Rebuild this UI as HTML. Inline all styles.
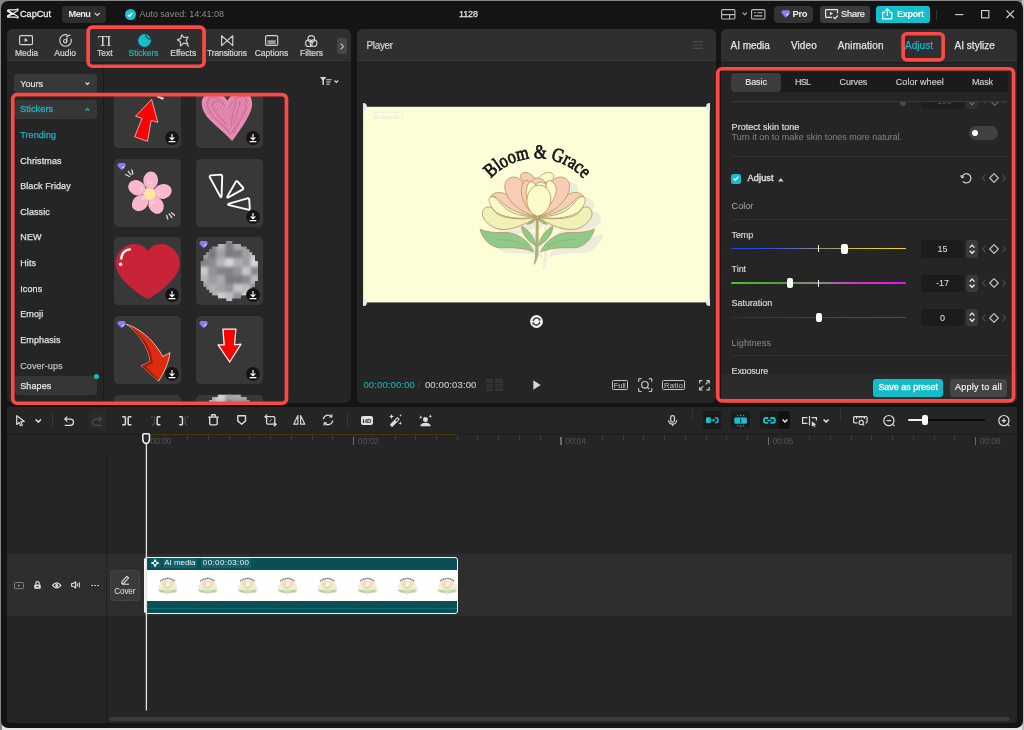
<!DOCTYPE html>
<html lang="en">
<head>
<meta charset="utf-8">
<title>CapCut - 1128</title>
<style>
*{box-sizing:border-box;margin:0;padding:0}
html,body{width:1024px;height:730px;overflow:hidden;background:#868789}
body{font-family:"Liberation Sans",sans-serif;font-size:9px;color:#e6e6e6;position:relative}
.abs{position:absolute}
#win{position:absolute;left:1.1px;top:1.1px;width:1021.8px;height:727.3px;background:#141414;border-radius:7px}
#ui{position:absolute;left:0;top:0;width:1024px;height:730px;overflow:hidden;will-change:transform}
.panel{position:absolute;background:#252525;border-radius:6px;overflow:hidden}
svg{position:absolute;overflow:visible}
.t{position:absolute;white-space:nowrap;line-height:1}
</style>
</head>
<body>
<div class="abs" style="left:2px;top:722px;width:1022px;height:8px;background:#e3e6e9"></div>
<div class="abs" style="left:1022px;top:0;width:2px;height:730px;background:#bfc0c2"></div>
<div id="win"></div>
<div id="ui">

<!-- s_title -->
<svg style="left:7px;top:9.3px;" width="11.5" height="9" viewBox="0 0 11.5 9"><path d="M0.6 0.9H8L11 0V1.4L1 7.4M0.6 0.9V2.2L4.4 4.5L0.6 6.8V8.1H8L11 9V7.6L1 1.6" fill="none" stroke="#ececec" stroke-width="1.2" stroke-linejoin="round"/></svg>
<div class="t" style="left:20px;top:10px;font-size:9.2px;color:#ececec;letter-spacing:-0.04px;-webkit-text-stroke:0.3px #ececec;">CapCut</div>
<div class="abs" style="left:62px;top:5.5px;width:44px;height:17.5px;background:#2d2d2d;border-radius:3px;"></div>
<div class="t" style="left:68.5px;top:10px;font-size:9.2px;color:#ececec;font-weight:bold;letter-spacing:-0.51px;">Menu</div>
<svg style="left:94px;top:12px;" width="6.5" height="4.5" viewBox="0 0 6.5 4.5"><path d="M0.7 0.9L3.25 3.4L5.8 0.9" fill="none" stroke="#d8d8d8" stroke-width="1.2" /></svg>
<div class="abs" style="left:124.8px;top:8.8px;width:11px;height:11px;background:#18c2d4;border-radius:5.5px;"></div>
<svg style="left:127.3px;top:11.6px;" width="6" height="5.5" viewBox="0 0 6 5.5"><path d="M0.8 2.7L2.4 4.3L5.3 1" fill="none" stroke="#fff" stroke-width="1.3" /></svg>
<div class="t" style="left:139.5px;top:10px;font-size:9px;color:#8c8c8c;letter-spacing:-0.03px;">Auto saved: 14:41:08</div>
<div class="t" style="left:459px;top:10px;font-size:9px;color:#e4e4e4;letter-spacing:-0.12px;-webkit-text-stroke:0.25px #e4e4e4;">1128</div>
<svg style="left:720.6px;top:9px;" width="14.5" height="10.6" viewBox="0 0 14.5 10.6"><rect x="0.6" y="0.6" width="13.3" height="9.4" rx="1" fill="none" stroke="#bcbcbc" stroke-width="1.1"/><path d="M0.6 5.6H13.9M8.6 5.6V10" fill="none" stroke="#bcbcbc" stroke-width="1.1" /></svg>
<svg style="left:741.5px;top:12px;" width="5.5" height="3.6" viewBox="0 0 5.5 3.6"><path d="M0.6 0.6L2.75 2.8L4.9 0.6" fill="none" stroke="#bcbcbc" stroke-width="1.1" /></svg>
<svg style="left:751px;top:9px;" width="14.5" height="10.6" viewBox="0 0 14.5 10.6"><rect x="0.6" y="0.6" width="13.3" height="9.4" rx="1" fill="none" stroke="#bcbcbc" stroke-width="1.1"/><path d="M3 3.8H4.8M6.2 3.8H11.5M3 6.9H11.5" fill="none" stroke="#bcbcbc" stroke-width="1.1" /></svg>
<div class="abs" style="left:773.8px;top:5.5px;width:39.6px;height:17.5px;background:#333;border-radius:4.5px;"></div>
<svg style="left:781px;top:10.3px;" width="9.5" height="8" viewBox="0 0 9.5 8"><path d="M1.8 0.2H7.7L9.4 2.6L4.75 7.8L0.1 2.6Z" fill="#8e7cf6"/><path d="M5.2 4.1L8.3 3.4L6.2 6.2Z" fill="#ece8ff"/></svg>
<div class="t" style="left:792.5px;top:9px;font-size:9.4px;color:#f2f2f2;font-weight:bold;letter-spacing:-0.34px;">Pro</div>
<div class="abs" style="left:820px;top:5.5px;width:50px;height:17.5px;background:#3d3d3d;border-radius:3px;"></div>
<svg style="left:825px;top:9px;" width="13.5" height="10.5" viewBox="0 0 13.5 10.5"><path d="M7 8.4H1.2Q0.6 8.4 0.6 7.8V1.2Q0.6 0.6 1.2 0.6H11.9Q12.5 0.6 12.5 1.2V4.6" fill="none" stroke="#e8e8e8" stroke-width="1.2" /><path d="M4.9 2.7L8 4.5L4.9 6.3Z" fill="#e8e8e8"/><path d="M8.4 8L10 9.6L12.9 6.5" fill="none" stroke="#e8e8e8" stroke-width="1.2" /></svg>
<div class="t" style="left:841px;top:10px;font-size:9.2px;color:#efefef;letter-spacing:-0.14px;-webkit-text-stroke:0.2px #efefef;">Share</div>
<div class="abs" style="left:876.2px;top:5.5px;width:53.4px;height:17.5px;background:#13bfcd;border-radius:3px;"></div>
<svg style="left:882px;top:8.2px;" width="10.5" height="11.5" viewBox="0 0 10.5 11.5"><path d="M3 4.3H0.7V10.8H9.8V4.3H7.5" fill="none" stroke="#fff" stroke-width="1.2" /><path d="M5.25 8V1M3 3.1L5.25 0.9L7.5 3.1" fill="none" stroke="#fff" stroke-width="1.2" /></svg>
<div class="t" style="left:897px;top:10px;font-size:9.2px;color:#fff;font-weight:bold;letter-spacing:-0.43px;">Export</div>
<div class="abs" style="left:936px;top:10px;width:1px;height:9.5px;background:#353535;"></div>
<svg style="left:955px;top:14px;" width="8.5" height="1.2" viewBox="0 0 8.5 1.2"><path d="M0 0.6H8.5" fill="none" stroke="#d6d6d6" stroke-width="1.1" /></svg>
<svg style="left:981px;top:10.4px;" width="8.4" height="8.4" viewBox="0 0 8.4 8.4"><rect x="0.55" y="0.55" width="7.3" height="7.3" fill="none" stroke="#d6d6d6" stroke-width="1.1"/></svg>
<svg style="left:1006px;top:10.4px;" width="8.4" height="8.4" viewBox="0 0 8.4 8.4"><path d="M0.4 0.4L8 8M8 0.4L0.4 8" fill="none" stroke="#d6d6d6" stroke-width="1.1" /></svg>
<!-- s_left -->
<div class="panel" style="left:7px;top:28.6px;width:344.3px;height:374.6px"></div>
<div class="abs" style="left:7px;top:28.6px;width:344.3px;height:33.4px;background:#2f2f2f;border-radius:6px 6px 0 0"></div>
<div class="abs" style="left:7px;top:62px;width:344.3px;height:1px;background:#1c1c1c;"></div>
<svg style="left:19.1px;top:35.4px;" width="14.1" height="10.3" viewBox="0 0 14.1 10.3"><rect x="0.6" y="0.6" width="12.9" height="9.1" rx="1.2" fill="none" stroke="#d4d4d4" stroke-width="1.15"/><path d="M5.6 3.1L9 5.15L5.6 7.2Z" fill="#d4d4d4"/></svg>
<div class="t" style="left:15px;top:49px;font-size:8.5px;color:#d8d8d8;letter-spacing:-0.04px;-webkit-text-stroke:0.2px #d8d8d8;">Media</div>
<svg style="left:59px;top:34.2px;" width="13" height="13" viewBox="0 0 13 13"><path d="M12.1 5A5.8 5.8 0 1 1 8.5 1.05" fill="none" stroke="#d4d4d4" stroke-width="1.15" stroke-linecap="round"/><circle cx="6.2" cy="7.2" r="1.7" fill="none" stroke="#d4d4d4" stroke-width="1.1"/><path d="M7.9 7.2V2.6L11 0.9" fill="none" stroke="#d4d4d4" stroke-width="1.1" stroke-linecap="round" stroke-linejoin="round"/></svg>
<div class="t" style="left:54.3px;top:49px;font-size:8.5px;color:#d8d8d8;letter-spacing:-0.01px;-webkit-text-stroke:0.2px #d8d8d8;">Audio</div>
<div class="t" style="left:98px;top:33px;font-size:15.5px;color:#dadada;font-family:'Liberation Serif',serif;letter-spacing:-1.23px;">TI</div>
<div class="t" style="left:97px;top:49px;font-size:8.5px;color:#d8d8d8;letter-spacing:0.04px;-webkit-text-stroke:0.2px #d8d8d8;">Text</div>
<svg style="left:137.6px;top:34.1px;" width="13" height="13" viewBox="0 0 13 13"><circle cx="6.5" cy="6.5" r="6.4" fill="#17bccb"/><path d="M7.6 0.4Q7.4 4.2 12.4 5.4" fill="none" stroke="#2e2e2e" stroke-width="1.1" /></svg>
<div class="t" style="left:128.5px;top:49px;font-size:8.5px;color:#18b7c8;letter-spacing:-0.03px;-webkit-text-stroke:0.2px #18b7c8;">Stickers</div>
<svg style="left:177px;top:34px;" width="12.8" height="13" viewBox="0 0 12.8 13"><g transform="rotate(-14 6 6)"><path d="M5.9 0.6L7.7 3.9L11.6 4.3L8.9 7.1L9.7 11.1L5.9 9.2L2.2 11.2L3 7.1L0.6 4.4L4.3 3.9Z" fill="none" stroke="#d4d4d4" stroke-width="1.15" stroke-linejoin="round"/></g><path d="M9.9 10.4L11.7 12.6" fill="none" stroke="#d4d4d4" stroke-width="1.1" /></svg>
<div class="t" style="left:170.2px;top:49px;font-size:8.5px;color:#d8d8d8;letter-spacing:0.03px;-webkit-text-stroke:0.2px #d8d8d8;">Effects</div>
<svg style="left:221.2px;top:35.1px;" width="12.4" height="11.4" viewBox="0 0 12.4 11.4"><path d="M0.6 0.8L11.8 10.6V0.8L0.6 10.6Z" fill="none" stroke="#d4d4d4" stroke-width="1.15" stroke-linejoin="round"/></svg>
<div class="t" style="left:207px;top:49px;font-size:8.5px;color:#d8d8d8;letter-spacing:-0.13px;-webkit-text-stroke:0.2px #d8d8d8;">Transitions</div>
<svg style="left:264.8px;top:35px;" width="13.3" height="11" viewBox="0 0 13.3 11"><rect x="0.6" y="0.6" width="12.1" height="9.8" rx="1.2" fill="none" stroke="#d4d4d4" stroke-width="1.15"/><path d="M2.6 6.2H10.7M2.6 8.2H10.7" fill="none" stroke="#d4d4d4" stroke-width="1.2" /></svg>
<div class="t" style="left:254.7px;top:49px;font-size:8.5px;color:#d8d8d8;letter-spacing:0.01px;-webkit-text-stroke:0.2px #d8d8d8;">Captions</div>
<svg style="left:305px;top:34.6px;" width="12.5" height="12.4" viewBox="0 0 12.5 12.4"><circle cx="6.25" cy="3.9" r="3.3" fill="none" stroke="#d4d4d4" stroke-width="1.15"/><circle cx="3.9" cy="8.2" r="3.3" fill="none" stroke="#d4d4d4" stroke-width="1.15"/><circle cx="8.6" cy="8.2" r="3.3" fill="none" stroke="#d4d4d4" stroke-width="1.15"/></svg>
<div class="t" style="left:300px;top:49px;font-size:8.5px;color:#d8d8d8;letter-spacing:-0.02px;-webkit-text-stroke:0.2px #d8d8d8;">Filters</div>
<div class="abs" style="left:337px;top:38.2px;width:9.9px;height:15.6px;background:#474747;border-radius:2.5px;"></div>
<svg style="left:340px;top:42.6px;" width="4.2" height="7" viewBox="0 0 4.2 7"><path d="M0.7 0.7L3.5 3.5L0.7 6.3" fill="none" stroke="#cfcfcf" stroke-width="1.05" /></svg>
<div class="abs" style="left:13.5px;top:74.3px;width:83.2px;height:19px;background:#383838;border-radius:3px;"></div>
<div class="t" style="left:20.3px;top:80px;font-size:9px;color:#e2e2e2;letter-spacing:-0.02px;-webkit-text-stroke:0.2px #e2e2e2;">Yours</div>
<svg style="left:85px;top:82.4px;" width="4.8" height="3" viewBox="0 0 4.8 3"><path d="M0.5 0.5L2.4 2.4L4.3 0.5" fill="none" stroke="#e0e0e0" stroke-width="1.1" /></svg>
<div class="abs" style="left:15px;top:100.4px;width:81.7px;height:18.6px;background:#363636;border-radius:3px;"></div>
<div class="t" style="left:20px;top:105px;font-size:9.3px;color:#19b6c6;letter-spacing:0.03px;-webkit-text-stroke:0.3px #19b6c6;">Stickers</div>
<svg style="left:85px;top:108px;" width="4.8" height="3" viewBox="0 0 4.8 3"><path d="M0.5 2.5L2.4 0.6L4.3 2.5" fill="none" stroke="#19b6c6" stroke-width="1.1" /></svg>
<div class="t" style="left:20.2px;top:131px;font-size:9px;color:#19b6c6;letter-spacing:0.1px;-webkit-text-stroke:0.25px #19b6c6;">Trending</div>
<div class="t" style="left:20.2px;top:157px;font-size:9px;color:#e0e0e0;letter-spacing:0.1px;-webkit-text-stroke:0.25px #e0e0e0;">Christmas</div>
<div class="t" style="left:20.2px;top:182px;font-size:9px;color:#e0e0e0;letter-spacing:0.09px;-webkit-text-stroke:0.25px #e0e0e0;">Black Friday</div>
<div class="t" style="left:20.2px;top:208px;font-size:9px;color:#e0e0e0;letter-spacing:0.1px;-webkit-text-stroke:0.25px #e0e0e0;">Classic</div>
<div class="t" style="left:20.2px;top:233px;font-size:9px;color:#e0e0e0;letter-spacing:0.21px;-webkit-text-stroke:0.25px #e0e0e0;">NEW</div>
<div class="t" style="left:20.2px;top:259px;font-size:9px;color:#e0e0e0;letter-spacing:0.1px;-webkit-text-stroke:0.25px #e0e0e0;">Hits</div>
<div class="t" style="left:20.2px;top:285px;font-size:9px;color:#e0e0e0;letter-spacing:0.11px;-webkit-text-stroke:0.25px #e0e0e0;">Icons</div>
<div class="t" style="left:20.2px;top:310px;font-size:9px;color:#e0e0e0;letter-spacing:0.11px;-webkit-text-stroke:0.25px #e0e0e0;">Emoji</div>
<div class="t" style="left:20.2px;top:336px;font-size:9px;color:#e0e0e0;letter-spacing:0.11px;-webkit-text-stroke:0.25px #e0e0e0;">Emphasis</div>
<div class="t" style="left:20.2px;top:362px;font-size:9px;color:#bdbdbd;letter-spacing:0.1px;-webkit-text-stroke:0.25px #bdbdbd;">Cover-ups</div>
<div class="abs" style="left:15px;top:376.1px;width:81.7px;height:19.1px;background:#363636;border-radius:3px;"></div>
<div class="t" style="left:20.2px;top:382px;font-size:9px;color:#e4e4e4;letter-spacing:0.12px;-webkit-text-stroke:0.25px #e4e4e4;">Shapes</div>
<div class="abs" style="left:94px;top:373.7px;width:5.4px;height:5.4px;background:#17bccb;border-radius:2.7px;"></div>
<div class="abs" style="left:102.8px;top:63px;width:1px;height:340.4px;background:#1b1b1b;"></div>
<svg style="left:320px;top:77.4px;" width="12" height="8.6" viewBox="0 0 12 8.6"><path d="M0 0H6.3L3.9 3.3V8.2L2.4 7.4V3.3Z" fill="#dadada"/><path d="M6.3 2.7H11.6M6.3 5H10.6M6.3 7.2H9.6" fill="none" stroke="#dadada" stroke-width="1.1" /></svg>
<svg style="left:334.4px;top:80.2px;" width="4.8" height="3" viewBox="0 0 4.8 3"><path d="M0.5 0.5L2.4 2.4L4.3 0.5" fill="none" stroke="#dadada" stroke-width="1.1" /></svg>
<div class="abs" style="left:104px;top:95px;width:247px;height:308.2px;overflow:hidden"><div class="abs" style="left:-104px;top:-95px;width:400px;height:500px">
<div class="abs" style="left:113.8px;top:80.2px;width:67.6px;height:67.8px;background:#383838;border-radius:4.5px;"></div>
<div class="abs" style="left:195.5px;top:80.2px;width:67.6px;height:67.8px;background:#383838;border-radius:4.5px;"></div>
<div class="abs" style="left:113.8px;top:158.8px;width:67.6px;height:67.8px;background:#383838;border-radius:4.5px;"></div>
<div class="abs" style="left:195.5px;top:158.8px;width:67.6px;height:67.8px;background:#383838;border-radius:4.5px;"></div>
<div class="abs" style="left:113.8px;top:237.2px;width:67.6px;height:67.8px;background:#383838;border-radius:4.5px;"></div>
<div class="abs" style="left:195.5px;top:237.2px;width:67.6px;height:67.8px;background:#383838;border-radius:4.5px;"></div>
<div class="abs" style="left:113.8px;top:316px;width:67.6px;height:67.8px;background:#383838;border-radius:4.5px;"></div>
<div class="abs" style="left:195.5px;top:316px;width:67.6px;height:67.8px;background:#383838;border-radius:4.5px;"></div>
<div class="abs" style="left:113.8px;top:394.8px;width:67.6px;height:67.8px;background:#383838;border-radius:4.5px;"></div>
<div class="abs" style="left:195.5px;top:394.8px;width:67.6px;height:67.8px;background:#383838;border-radius:4.5px;"></div>
<svg style="left:0;top:0" width="360" height="460" viewBox="0 0 360 460"><path d="M151.6 99.4L157.8 122.4L151.2 120.4L147.5 141.3L134.7 136.8L142.1 118.3L135.5 116.3Z" fill="#fe0000" stroke="#f4e9e6" stroke-width="0.7" stroke-linejoin="round"/><path d="M157.8 96.2L162.6 98.4" stroke="#f3ecec" stroke-width="2.2" stroke-linecap="round"/><path d="M158.5 96L162 97.6" stroke="#e8484a" stroke-width="0.8"/><defs><pattern id="hatch" width="2.6" height="2.6" patternUnits="userSpaceOnUse" patternTransform="rotate(-62)"><rect width="2.6" height="2.6" fill="#e98db4"/><path d="M0 1.3H2.6" stroke="#cf78a0" stroke-width="0.9"/></pattern></defs><path d="M227.4 103.5C224.5 95.5 214 90.5 207 95C200.5 99.5 202.5 109 207.5 115.5C213.5 123 224 130.5 232 139.3C237.5 132 246 121 249.8 110.5C253 101.5 249.5 93 242.5 92.5C235.5 92.2 230 97 227.4 103.5Z" fill="url(#hatch)"/><path d="M227.4 103.5C224.5 95.5 214 90.5 207 95C200.5 99.5 202.5 109 207.5 115.5C213.5 123 224 130.5 232 139.3C237.5 132 246 121 249.8 110.5C253 101.5 249.5 93 242.5 92.5C235.5 92.2 230 97 227.4 103.5Z" fill="none" stroke="#e98db4" stroke-width="2.2"/><path d="M224.5 106C221 99 214 95 209.5 98.5C204.500 103 208.500 111 213 116C218 121.5 226 128 231 134M229.500 108C231.500 101 238 95.500 243 96.500C248 98 247 106 244.500 112C241 120 236 127 232.500 132.500M219 102C215 100 212 102 212.500 106C213.500 111 220 118 226 124M236 102C234 108 232 117 231 126M240 101C239 108 236 117 233.500 124" fill="none" stroke="#c46a94" stroke-width="1.1" stroke-linecap="round" opacity="0.8"/><ellipse cx="150.7" cy="180.3" rx="8.9" ry="7.4" transform="rotate(-85.86 150.7 180.3)" fill="#f9b7cd"/><ellipse cx="162.9" cy="191.4" rx="8.9" ry="7.4" transform="rotate(-11.56 162.9 191.4)" fill="#f9b7cd"/><ellipse cx="156" cy="205.2" rx="8.9" ry="7.4" transform="rotate(60.42 156 205.2)" fill="#f9b7cd"/><ellipse cx="140.1" cy="203" rx="8.9" ry="7.4" transform="rotate(137.17 140.1 203)" fill="#f9b7cd"/><ellipse cx="136.9" cy="187.8" rx="8.9" ry="7.4" transform="rotate(-153.79 136.9 187.8)" fill="#f9b7cd"/><circle cx="149.7" cy="194" r="7" fill="#f9b7cd"/><circle cx="149.7" cy="194.2" r="5.6" fill="#fde8a2"/><path d="M148.4 183.5L148.9 181.8M151.4 183.8L151.9 182.2M140.8 189.5L142.3 190.3M141.6 187.3L142.9 188.3M157.4 191.8L159 191.3M157.7 194.5L159.2 194.7M142 198.800L143.300 199.800M143.500 197.500L144.500 198.600M153.200 201.500L153.800 203M151.400 202.300L151.800 203.700" stroke="#fff" stroke-width="0.8" stroke-linecap="round" opacity="0.9"/><path d="M125.5 174.5L129.5 176.500M128.300 171.300L131 174.800M131.900 170L132.900 174" stroke="#dcdcd6" stroke-width="1.3" stroke-linecap="round"/><path d="M166.600 215.500L167.800 219M169.200 213.800L171.800 217.600M171.500 212.800L174.500 215.300" stroke="#dcdcd6" stroke-width="1.3" stroke-linecap="round"/><path d="M209.8 177.2Q209.2 175.6 211 175.4L220.5 174.6Q222.3 174.6 222.2 176.4L221.6 196Q221.3 198.2 220.2 196.4Z" fill="none" stroke="#fff" stroke-width="1.9" stroke-linejoin="round"/><path d="M236 181.400Q236.900 180.800 237.700 181.600L242.900 187.500Q243.700 188.800 242.400 189.600L228.300 197.400Q226.600 198 227.500 196.300Z" fill="none" stroke="#fff" stroke-width="1.9" stroke-linejoin="round"/><path d="M229 203.700L247.500 198.300Q249 198 249.200 199.500L249.800 208.300Q249.700 210 248.200 209.700L229 205.200Q227.300 204.500 229 203.700Z" fill="none" stroke="#fff" stroke-width="1.9" stroke-linejoin="round"/><path d="M147.7 251.4C150.5 245.800 157.500 243 164 244.200C173.500 246.200 181.500 255.500 179.300 267C177 279 160 292 150.500 297.700Q147.700 299.500 145 297.800C135 291.500 118.500 279 116 267C113.800 255.500 121.500 246.200 131.500 244.200C138 243 145 245.800 147.700 251.400Z" fill="#c92338"/><path d="M121.300 258.500C121.800 253.500 125 250 129.800 249.400" fill="none" stroke="#fff" stroke-width="2.400" stroke-linecap="round"/><circle cx="120.600" cy="264.200" r="1.700" fill="#fff"/><defs><clipPath id="m1"><rect x="226.45" y="241.07" width="5.7" height="2.91"/><rect x="217.9" y="243.92" width="22.8" height="2.91"/><rect x="212.2" y="246.77" width="34.2" height="2.91"/><rect x="209.35" y="249.62" width="39.9" height="2.91"/><rect x="206.5" y="252.47" width="45.6" height="2.91"/><rect x="203.65" y="255.32" width="51.3" height="2.91"/><rect x="203.65" y="258.18" width="51.3" height="2.91"/><rect x="200.8" y="261.02" width="57" height="2.91"/><rect x="200.8" y="263.88" width="57" height="2.91"/><rect x="200.8" y="266.72" width="57" height="2.91"/><rect x="200.8" y="269.57" width="57" height="2.91"/><rect x="200.8" y="272.43" width="57" height="2.91"/><rect x="200.8" y="275.27" width="57" height="2.91"/><rect x="200.8" y="278.12" width="57" height="2.91"/><rect x="203.65" y="280.97" width="51.3" height="2.91"/><rect x="203.65" y="283.82" width="51.3" height="2.91"/><rect x="206.5" y="286.68" width="45.6" height="2.91"/><rect x="209.35" y="289.52" width="39.9" height="2.91"/><rect x="212.2" y="292.38" width="34.2" height="2.91"/><rect x="217.9" y="295.22" width="22.8" height="2.91"/><rect x="226.45" y="298.07" width="5.7" height="2.91"/></clipPath><filter id="m1f" x="-10%" y="-10%" width="120%" height="120%"><feGaussianBlur stdDeviation="1.4"/></filter></defs><g clip-path="url(#m1)"><rect x="197.7" y="239.4" width="63.2" height="63.2" fill="#a9acb0"/><g filter="url(#m1f)"><rect x="199.38" y="241.07" width="8.65" height="8.65" fill="#949699"/><rect x="207.93" y="241.07" width="8.65" height="8.65" fill="#838588"/><rect x="216.47" y="241.07" width="8.65" height="8.65" fill="#b5b7ba"/><rect x="225.03" y="241.07" width="8.65" height="8.65" fill="#7b7d80"/><rect x="233.57" y="241.07" width="8.65" height="8.65" fill="#a9abae"/><rect x="242.12" y="241.07" width="8.65" height="8.65" fill="#989a9d"/><rect x="250.68" y="241.07" width="8.65" height="8.65" fill="#797b7e"/><rect x="199.38" y="249.62" width="8.65" height="8.65" fill="#a6a8ab"/><rect x="207.93" y="249.62" width="8.65" height="8.65" fill="#77797c"/><rect x="216.47" y="249.62" width="8.65" height="8.65" fill="#9fa1a4"/><rect x="225.03" y="249.62" width="8.65" height="8.65" fill="#7a7c7f"/><rect x="233.57" y="249.62" width="8.65" height="8.65" fill="#7d7f82"/><rect x="242.12" y="249.62" width="8.65" height="8.65" fill="#9ea0a3"/><rect x="250.68" y="249.62" width="8.65" height="8.65" fill="#c6c8cb"/><rect x="199.38" y="258.18" width="8.65" height="8.65" fill="#808285"/><rect x="207.93" y="258.18" width="8.65" height="8.65" fill="#8a8c8f"/><rect x="216.47" y="258.18" width="8.65" height="8.65" fill="#b2b4b7"/><rect x="225.03" y="258.18" width="8.65" height="8.65" fill="#d2d4d7"/><rect x="233.57" y="258.18" width="8.65" height="8.65" fill="#adafb2"/><rect x="242.12" y="258.18" width="8.65" height="8.65" fill="#9b9da0"/><rect x="250.68" y="258.18" width="8.65" height="8.65" fill="#d5d7da"/><rect x="259.23" y="258.18" width="8.65" height="8.65" fill="#787a7d"/><rect x="199.38" y="266.72" width="8.65" height="8.65" fill="#c9cbce"/><rect x="207.93" y="266.72" width="8.65" height="8.65" fill="#909295"/><rect x="216.47" y="266.72" width="8.65" height="8.65" fill="#828487"/><rect x="225.03" y="266.72" width="8.65" height="8.65" fill="#7f8184"/><rect x="233.57" y="266.72" width="8.65" height="8.65" fill="#929497"/><rect x="242.12" y="266.72" width="8.65" height="8.65" fill="#c5c7ca"/><rect x="250.68" y="266.72" width="8.65" height="8.65" fill="#86888b"/><rect x="259.23" y="266.72" width="8.65" height="8.65" fill="#aeb0b3"/><rect x="199.38" y="275.27" width="8.65" height="8.65" fill="#b3b5b8"/><rect x="207.93" y="275.27" width="8.65" height="8.65" fill="#999b9e"/><rect x="216.47" y="275.27" width="8.65" height="8.65" fill="#aaacaf"/><rect x="225.03" y="275.27" width="8.65" height="8.65" fill="#7a7c7f"/><rect x="233.57" y="275.27" width="8.65" height="8.65" fill="#797b7e"/><rect x="242.12" y="275.27" width="8.65" height="8.65" fill="#888a8d"/><rect x="250.68" y="275.27" width="8.65" height="8.65" fill="#b8babd"/><rect x="259.23" y="275.27" width="8.65" height="8.65" fill="#9ea0a3"/><rect x="199.38" y="283.82" width="8.65" height="8.65" fill="#939598"/><rect x="207.93" y="283.82" width="8.65" height="8.65" fill="#aeb0b3"/><rect x="216.47" y="283.82" width="8.65" height="8.65" fill="#a1a3a6"/><rect x="225.03" y="283.82" width="8.65" height="8.65" fill="#919396"/><rect x="233.57" y="283.82" width="8.65" height="8.65" fill="#c3c5c8"/><rect x="242.12" y="283.82" width="8.65" height="8.65" fill="#b9bbbe"/><rect x="250.68" y="283.82" width="8.65" height="8.65" fill="#8c8e91"/><rect x="199.38" y="292.38" width="8.65" height="8.65" fill="#adafb2"/><rect x="207.93" y="292.38" width="8.65" height="8.65" fill="#a8aaad"/><rect x="216.47" y="292.38" width="8.65" height="8.65" fill="#cbcdd0"/><rect x="225.03" y="292.38" width="8.65" height="8.65" fill="#bcbec1"/><rect x="233.57" y="292.38" width="8.65" height="8.65" fill="#909295"/><rect x="242.12" y="292.38" width="8.65" height="8.65" fill="#d6d8db"/><rect x="250.68" y="292.38" width="8.65" height="8.65" fill="#7f8184"/><rect x="216.47" y="300.93" width="8.65" height="8.65" fill="#9d9fa2"/><rect x="225.03" y="300.93" width="8.65" height="8.65" fill="#bfc1c4"/><rect x="233.57" y="300.93" width="8.65" height="8.65" fill="#838588"/></g></g><path d="M126.100 324.200C134 326.500 146 333 155.500 345.500C158.500 349.500 161 353 162.800 356.600L169.900 352.700C169 362 164 373 158.400 381.200C153 376 146.500 370 141.400 365.900L150.200 361.500C149.500 355 147.500 350.500 145.300 346.200C141 338 134.500 329.500 126.100 324.200Z" fill="#dd2b10" stroke="#f3e3c6" stroke-width="0.800" stroke-linejoin="round"/><path d="M126.100 324.200C134.500 329.500 141 338 145.300 346.200C147.500 350.500 149.500 355 150.200 361.500L141.400 365.900C146.500 370 153 376 158.400 381.200C157.800 379.500 157.500 378.500 157 377.500L146 366.500L152.800 363C152.500 356 150.500 351 148 346C143.500 337.500 136 329 126.100 324.200Z" fill="#a51b0d"/><path d="M222.900 329.200H235.900L234.500 344.900L241 344.200L229.700 362L218.100 344.900H224.200Z" fill="#fe0000" stroke="#fbf3f1" stroke-width="1.300" stroke-linejoin="round"/><defs><clipPath id="t52"><rect x="195.5" y="394.8" width="67.6" height="60"/></clipPath></defs><g clip-path="url(#t52)"><defs><clipPath id="m2"><rect x="226.45" y="391.38" width="5.7" height="2.91"/><rect x="217.9" y="394.23" width="22.8" height="2.91"/><rect x="212.2" y="397.07" width="34.2" height="2.91"/><rect x="209.35" y="399.93" width="39.9" height="2.91"/><rect x="206.5" y="402.77" width="45.6" height="2.91"/><rect x="203.65" y="405.62" width="51.3" height="2.91"/><rect x="203.65" y="408.48" width="51.3" height="2.91"/><rect x="200.8" y="411.32" width="57" height="2.91"/><rect x="200.8" y="414.18" width="57" height="2.91"/><rect x="200.8" y="417.02" width="57" height="2.91"/><rect x="200.8" y="419.88" width="57" height="2.91"/><rect x="200.8" y="422.73" width="57" height="2.91"/><rect x="200.8" y="425.57" width="57" height="2.91"/><rect x="200.8" y="428.43" width="57" height="2.91"/><rect x="203.65" y="431.27" width="51.3" height="2.91"/><rect x="203.65" y="434.12" width="51.3" height="2.91"/><rect x="206.5" y="436.98" width="45.6" height="2.91"/><rect x="209.35" y="439.82" width="39.9" height="2.91"/><rect x="212.2" y="442.68" width="34.2" height="2.91"/><rect x="217.9" y="445.52" width="22.8" height="2.91"/><rect x="226.45" y="448.38" width="5.7" height="2.91"/></clipPath><filter id="m2f" x="-10%" y="-10%" width="120%" height="120%"><feGaussianBlur stdDeviation="1.4"/></filter></defs><g clip-path="url(#m2)"><rect x="197.7" y="389.7" width="63.2" height="63.2" fill="#a9acb0"/><g filter="url(#m2f)"><rect x="199.38" y="391.38" width="8.65" height="8.65" fill="#a1a3a6"/><rect x="207.93" y="391.38" width="8.65" height="8.65" fill="#abadb0"/><rect x="216.47" y="391.38" width="8.65" height="8.65" fill="#d0d2d5"/><rect x="225.03" y="391.38" width="8.65" height="8.65" fill="#a2a4a7"/><rect x="233.57" y="391.38" width="8.65" height="8.65" fill="#a6a8ab"/><rect x="242.12" y="391.38" width="8.65" height="8.65" fill="#aeb0b3"/><rect x="250.68" y="391.38" width="8.65" height="8.65" fill="#86888b"/><rect x="199.38" y="399.93" width="8.65" height="8.65" fill="#a7a9ac"/><rect x="207.93" y="399.93" width="8.65" height="8.65" fill="#b2b4b7"/><rect x="216.47" y="399.93" width="8.65" height="8.65" fill="#c3c5c8"/><rect x="225.03" y="399.93" width="8.65" height="8.65" fill="#7d7f82"/><rect x="233.57" y="399.93" width="8.65" height="8.65" fill="#929497"/><rect x="242.12" y="399.93" width="8.65" height="8.65" fill="#7d7f82"/><rect x="250.68" y="399.93" width="8.65" height="8.65" fill="#c4c6c9"/><rect x="199.38" y="408.48" width="8.65" height="8.65" fill="#b9bbbe"/><rect x="207.93" y="408.48" width="8.65" height="8.65" fill="#787a7d"/><rect x="216.47" y="408.48" width="8.65" height="8.65" fill="#d6d8db"/><rect x="225.03" y="408.48" width="8.65" height="8.65" fill="#d4d6d9"/><rect x="233.57" y="408.48" width="8.65" height="8.65" fill="#b5b7ba"/><rect x="242.12" y="408.48" width="8.65" height="8.65" fill="#b1b3b6"/><rect x="250.68" y="408.48" width="8.65" height="8.65" fill="#838588"/><rect x="259.23" y="408.48" width="8.65" height="8.65" fill="#75777a"/><rect x="199.38" y="417.02" width="8.65" height="8.65" fill="#a8aaad"/><rect x="207.93" y="417.02" width="8.65" height="8.65" fill="#797b7e"/><rect x="216.47" y="417.02" width="8.65" height="8.65" fill="#87898c"/><rect x="225.03" y="417.02" width="8.65" height="8.65" fill="#8c8e91"/><rect x="233.57" y="417.02" width="8.65" height="8.65" fill="#77797c"/><rect x="242.12" y="417.02" width="8.65" height="8.65" fill="#a2a4a7"/><rect x="250.68" y="417.02" width="8.65" height="8.65" fill="#a0a2a5"/><rect x="259.23" y="417.02" width="8.65" height="8.65" fill="#c8cacd"/><rect x="199.38" y="425.57" width="8.65" height="8.65" fill="#a7a9ac"/><rect x="207.93" y="425.57" width="8.65" height="8.65" fill="#b4b6b9"/><rect x="216.47" y="425.57" width="8.65" height="8.65" fill="#a5a7aa"/><rect x="225.03" y="425.57" width="8.65" height="8.65" fill="#b6b8bb"/><rect x="233.57" y="425.57" width="8.65" height="8.65" fill="#a1a3a6"/><rect x="242.12" y="425.57" width="8.65" height="8.65" fill="#8f9194"/><rect x="250.68" y="425.57" width="8.65" height="8.65" fill="#d7d9dc"/><rect x="259.23" y="425.57" width="8.65" height="8.65" fill="#d7d9dc"/><rect x="199.38" y="434.12" width="8.65" height="8.65" fill="#c8cacd"/><rect x="207.93" y="434.12" width="8.65" height="8.65" fill="#babcbf"/><rect x="216.47" y="434.12" width="8.65" height="8.65" fill="#939598"/><rect x="225.03" y="434.12" width="8.65" height="8.65" fill="#8a8c8f"/><rect x="233.57" y="434.12" width="8.65" height="8.65" fill="#909295"/><rect x="242.12" y="434.12" width="8.65" height="8.65" fill="#7b7d80"/><rect x="250.68" y="434.12" width="8.65" height="8.65" fill="#c0c2c5"/><rect x="199.38" y="442.68" width="8.65" height="8.65" fill="#9c9ea1"/><rect x="207.93" y="442.68" width="8.65" height="8.65" fill="#c8cacd"/><rect x="216.47" y="442.68" width="8.65" height="8.65" fill="#9a9c9f"/><rect x="225.03" y="442.68" width="8.65" height="8.65" fill="#d3d5d8"/><rect x="233.57" y="442.68" width="8.65" height="8.65" fill="#c8cacd"/><rect x="242.12" y="442.68" width="8.65" height="8.65" fill="#747679"/><rect x="250.68" y="442.68" width="8.65" height="8.65" fill="#888a8d"/><rect x="216.47" y="451.23" width="8.65" height="8.65" fill="#cfd1d4"/><rect x="225.03" y="451.23" width="8.65" height="8.65" fill="#a2a4a7"/><rect x="233.57" y="451.23" width="8.65" height="8.65" fill="#d6d8db"/></g></g></g></svg>
<svg style="left:164.7px;top:131.3px;" width="14" height="14" viewBox="0 0 14 14"><circle cx="7" cy="7" r="6.9" fill="#141414"/><path d="M7 3V8.6M4.6 6.4L7 8.8L9.4 6.4M3.6 10.6H10.4" fill="none" stroke="#fff" stroke-width="1.15" /></svg>
<svg style="left:246.3px;top:131.3px;" width="14" height="14" viewBox="0 0 14 14"><circle cx="7" cy="7" r="6.9" fill="#141414"/><path d="M7 3V8.6M4.6 6.4L7 8.8L9.4 6.4M3.6 10.6H10.4" fill="none" stroke="#fff" stroke-width="1.15" /></svg>
<svg style="left:246.3px;top:209.8px;" width="14" height="14" viewBox="0 0 14 14"><circle cx="7" cy="7" r="6.9" fill="#141414"/><path d="M7 3V8.6M4.6 6.4L7 8.8L9.4 6.4M3.6 10.6H10.4" fill="none" stroke="#fff" stroke-width="1.15" /></svg>
<svg style="left:164.7px;top:288.2px;" width="14" height="14" viewBox="0 0 14 14"><circle cx="7" cy="7" r="6.9" fill="#141414"/><path d="M7 3V8.6M4.6 6.4L7 8.8L9.4 6.4M3.6 10.6H10.4" fill="none" stroke="#fff" stroke-width="1.15" /></svg>
<svg style="left:246.3px;top:288.2px;" width="14" height="14" viewBox="0 0 14 14"><circle cx="7" cy="7" r="6.9" fill="#141414"/><path d="M7 3V8.6M4.6 6.4L7 8.8L9.4 6.4M3.6 10.6H10.4" fill="none" stroke="#fff" stroke-width="1.15" /></svg>
<svg style="left:164.7px;top:366.6px;" width="14" height="14" viewBox="0 0 14 14"><circle cx="7" cy="7" r="6.9" fill="#141414"/><path d="M7 3V8.6M4.6 6.4L7 8.8L9.4 6.4M3.6 10.6H10.4" fill="none" stroke="#fff" stroke-width="1.15" /></svg>
<svg style="left:246.3px;top:366.6px;" width="14" height="14" viewBox="0 0 14 14"><circle cx="7" cy="7" r="6.9" fill="#141414"/><path d="M7 3V8.6M4.6 6.4L7 8.8L9.4 6.4M3.6 10.6H10.4" fill="none" stroke="#fff" stroke-width="1.15" /></svg>
<svg style="left:117.4px;top:162.7px;" width="9.2" height="7.4" viewBox="0 0 9.2 7.4"><path d="M1.7 0.1H7.5L9.1 2.4L4.6 7.3L0.1 2.4Z" fill="#8b78f5"/><path d="M5 3.9L8 3.2L6 6Z" fill="#ece8ff"/></svg>
<svg style="left:199.1px;top:241.4px;" width="9.2" height="7.4" viewBox="0 0 9.2 7.4"><path d="M1.7 0.1H7.5L9.1 2.4L4.6 7.3L0.1 2.4Z" fill="#8b78f5"/><path d="M5 3.9L8 3.2L6 6Z" fill="#ece8ff"/></svg>
<svg style="left:117.4px;top:320.7px;" width="9.2" height="7.4" viewBox="0 0 9.2 7.4"><path d="M1.7 0.1H7.5L9.1 2.4L4.6 7.3L0.1 2.4Z" fill="#8b78f5"/><path d="M5 3.9L8 3.2L6 6Z" fill="#ece8ff"/></svg>
<svg style="left:199.1px;top:320.7px;" width="9.2" height="7.4" viewBox="0 0 9.2 7.4"><path d="M1.7 0.1H7.5L9.1 2.4L4.6 7.3L0.1 2.4Z" fill="#8b78f5"/><path d="M5 3.9L8 3.2L6 6Z" fill="#ece8ff"/></svg>
</div></div>
<!-- s_player -->
<div class="panel" style="left:356.6px;top:28.6px;width:359.9px;height:374.6px"></div>
<div class="abs" style="left:356.6px;top:28.6px;width:359.9px;height:33.4px;background:#2f2f2f;border-radius:6px 6px 0 0"></div>
<div class="abs" style="left:356.6px;top:62px;width:359.9px;height:1px;background:#1c1c1c;"></div>
<div class="t" style="left:366.5px;top:41px;font-size:10px;color:#dcdcdc;letter-spacing:-0.35px;-webkit-text-stroke:0.15px #dcdcdc;">Player</div>
<svg style="left:692.5px;top:41.2px;" width="10" height="8" viewBox="0 0 10 8"><path d="M0 0.6H10M0 4H10M0 7.4H10" fill="none" stroke="#4a4a4a" stroke-width="1.1" /></svg>
<svg style="left:0px;top:0px;" width="1024" height="730" viewBox="0 0 1024 730"><rect x="363.1" y="106.8" width="346.6" height="195.6" fill="#fdfdd8"/></svg>
<svg style="left:0;top:0" width="1024" height="730" viewBox="0 0 1024 730"><defs><path id="arcp" d="M490.99 178.44A62.4 62.4 0 0 1 583.37 178.85"/></defs><g id="bigflower"><defs><filter id="flsh" x="-5%" y="-5%" width="110%" height="110%"><feColorMatrix type="matrix" values="0 0 0 0 0.845  0 0 0 0 0.835  0 0 0 0 0.690  0 0 0 1 0"/></filter></defs><g transform="translate(8.500 5)" opacity="1"><g style="filter:url(#flsh)"><path d="M536.5 217.6C526 224 508 232.5 496.5 228.5C487 225.2 479.8 216.500 483.2 210.200C485.800 205.800 491.500 206 493.300 209.800C497.500 218 516 220.500 536.500 217.600Z" fill="#f1f0b6" stroke="#ad9658" stroke-width="0.8" stroke-linejoin="round"/><path d="M536.500 217C520 219.800 500.500 218 493.500 209.500C488 202.500 488 197 491.800 196.600C496.500 196.400 500 204 506.500 209.200C515 215.500 527 216.600 536.500 217Z" fill="#fcfac8" stroke="#ad9658" stroke-width="0.8" stroke-linejoin="round"/><path d="M536.500 216.600C524 215.500 509 210 501 201.500C497 197 493.500 195 490.800 196.800C492 193.500 497 191.800 502 192.800C510 194.500 518 207 536.500 216.600Z" fill="#f9cfb6" stroke="#ad9658" stroke-width="0.8" stroke-linejoin="round"/><path d="M536.500 216.400C521 213 509.500 203 505.500 191.500C503.300 184.500 506 178.200 512.500 177.200C518.500 176.500 522.500 180.500 523.500 186C525 197 529 208 536.500 216.400Z" fill="#f9cdb5" stroke="#ad9658" stroke-width="0.8" stroke-linejoin="round"/><g transform="translate(1074.4 0) scale(-1 1)"><path d="M536.5 217.6C526 224 508 232.5 496.5 228.5C487 225.2 479.8 216.500 483.2 210.200C485.800 205.800 491.500 206 493.300 209.800C497.500 218 516 220.500 536.500 217.600Z" fill="#f1f0b6" stroke="#ad9658" stroke-width="0.8" stroke-linejoin="round"/><path d="M536.500 217C520 219.800 500.500 218 493.500 209.500C488 202.500 488 197 491.800 196.600C496.500 196.400 500 204 506.500 209.200C515 215.500 527 216.600 536.500 217Z" fill="#fcfac8" stroke="#ad9658" stroke-width="0.8" stroke-linejoin="round"/><path d="M536.500 216.600C524 215.500 509 210 501 201.500C497 197 493.500 195 490.800 196.800C492 193.500 497 191.800 502 192.800C510 194.500 518 207 536.500 216.600Z" fill="#f9cfb6" stroke="#ad9658" stroke-width="0.8" stroke-linejoin="round"/><path d="M536.500 216.400C521 213 509.500 203 505.500 191.500C503.300 184.500 506 178.200 512.500 177.200C518.500 176.500 522.500 180.500 523.500 186C525 197 529 208 536.500 216.400Z" fill="#f9cdb5" stroke="#ad9658" stroke-width="0.8" stroke-linejoin="round"/></g><path d="M536.600 181C534 176.500 529.500 172 524.500 172.500C520 173 519.500 177.500 522.500 180.500C526 183 531 182 536.600 181Z" fill="#f9cdb5" stroke="#ad9658" stroke-width="0.8" stroke-linejoin="round"/><path d="M536.600 181C539 176.500 544 172 549.500 172.500C554.500 173 555 177.500 552 180.500C548 183 542 182 536.600 181Z" fill="#fcfac8" stroke="#ad9658" stroke-width="0.8" stroke-linejoin="round"/><path d="M535.500 216C526.500 209.500 520 198 521.500 188C522.500 182 525.500 179.500 528 180.500C532 182.500 529 192 530 200C530.800 207 533 212 535.500 216Z" fill="#f9cdb5" stroke="#ad9658" stroke-width="0.8" stroke-linejoin="round"/><path d="M536 216C529 209 525 198.500 526.500 189C527.500 183 531 179.800 534.500 181.500C538 184 534 193 534.500 201C534.800 207.500 535.500 212 536 216Z" fill="#fcfac8" stroke="#ad9658" stroke-width="0.8" stroke-linejoin="round"/><path d="M538.500 216C547 210 555.500 200 556.200 190.500C556.600 184.500 552.500 180 548.500 180.800C544.500 182 546.500 191 545.500 199C544.600 206.500 541.500 212 538.500 216Z" fill="#fcfac8" stroke="#ad9658" stroke-width="0.8" stroke-linejoin="round"/><path d="M531.500 181.500C533 178.500 537 177.300 540.500 178.500C543 179.500 545 181.500 545.500 184L538 186Z" fill="#f9cdb5" stroke="#ad9658" stroke-width="0.8" stroke-linejoin="round"/><path d="M536 184.500C538 181.500 542 181.500 544.500 183.500C546 185 546.500 187 546 188.500L539 188Z" fill="#fcfac8" stroke="#ad9658" stroke-width="0.8" stroke-linejoin="round"/><path d="M537.500 216.200C530.500 214 526 206.500 527 198.500C528 190.500 533.500 185 539.500 185.200C546 185.500 550.800 191.500 550.800 199C550.800 207.500 545 214.500 537.500 216.200Z" fill="#fdfbc9" stroke="#ad9658" stroke-width="0.8" stroke-linejoin="round"/><path d="M533.800 252C524 247.500 512 247.500 501 247.800C491.500 247.800 483 240 480 229.200C488 232.500 497 232.800 505 232.500C517 232.500 528.500 240 533.800 252Z" fill="#8fca8b" stroke="#ad9658" stroke-width="0.8" stroke-linejoin="round"/><path d="M497.500 239.800C507 239 519 241.500 527.500 246.500" fill="none" stroke="#ad9658" stroke-width="0.5" stroke-linejoin="round"/><path d="M535.600 245.600C527.500 241 521.500 233.500 521.700 226.200C528.500 230 534.500 237 535.600 245.600Z" fill="#8fca8b" stroke="#ad9658" stroke-width="0.8" stroke-linejoin="round"/><path d="M536.500 218.500C533 219.500 529.500 221.500 527.200 224.300C531.500 224 535 221.500 536.500 218.500Z" fill="#8fca8b" stroke="#ad9658" stroke-width="0.8" stroke-linejoin="round"/><g transform="translate(1074.4 0) scale(-1 1)"><path d="M533.800 252C524 247.500 512 247.500 501 247.800C491.500 247.800 483 240 480 229.200C488 232.500 497 232.800 505 232.500C517 232.500 528.500 240 533.800 252Z" fill="#8fca8b" stroke="#ad9658" stroke-width="0.8" stroke-linejoin="round"/><path d="M497.500 239.800C507 239 519 241.500 527.500 246.500" fill="none" stroke="#ad9658" stroke-width="0.5" stroke-linejoin="round"/><path d="M535.600 245.600C527.500 241 521.500 233.500 521.700 226.200C528.500 230 534.500 237 535.600 245.600Z" fill="#8fca8b" stroke="#ad9658" stroke-width="0.8" stroke-linejoin="round"/><path d="M536.500 218.500C533 219.500 529.500 221.500 527.200 224.300C531.500 224 535 221.500 536.500 218.500Z" fill="#8fca8b" stroke="#ad9658" stroke-width="0.8" stroke-linejoin="round"/></g><path d="M536.400 218.500L535.800 252C535.500 257 535 261 534.300 264.300C536.200 261 537.600 257 538 252L538.200 218.500Z" fill="#8fca8b" stroke="#ad9658" stroke-width="0.8" stroke-linejoin="round"/></g></g><path d="M536.5 217.6C526 224 508 232.5 496.5 228.5C487 225.2 479.8 216.500 483.2 210.200C485.800 205.800 491.500 206 493.300 209.800C497.500 218 516 220.500 536.500 217.600Z" fill="#f1f0b6" stroke="#ad9658" stroke-width="0.8" stroke-linejoin="round"/><path d="M536.500 217C520 219.800 500.500 218 493.500 209.500C488 202.500 488 197 491.800 196.600C496.500 196.400 500 204 506.500 209.200C515 215.500 527 216.600 536.500 217Z" fill="#fcfac8" stroke="#ad9658" stroke-width="0.8" stroke-linejoin="round"/><path d="M536.500 216.600C524 215.500 509 210 501 201.500C497 197 493.500 195 490.800 196.800C492 193.500 497 191.800 502 192.800C510 194.500 518 207 536.500 216.600Z" fill="#f9cfb6" stroke="#ad9658" stroke-width="0.8" stroke-linejoin="round"/><path d="M536.500 216.400C521 213 509.500 203 505.500 191.500C503.300 184.500 506 178.200 512.500 177.200C518.500 176.500 522.500 180.500 523.500 186C525 197 529 208 536.500 216.400Z" fill="#f9cdb5" stroke="#ad9658" stroke-width="0.8" stroke-linejoin="round"/><g transform="translate(1074.4 0) scale(-1 1)"><path d="M536.5 217.6C526 224 508 232.5 496.5 228.5C487 225.2 479.8 216.500 483.2 210.200C485.800 205.800 491.500 206 493.300 209.800C497.500 218 516 220.500 536.500 217.600Z" fill="#f1f0b6" stroke="#ad9658" stroke-width="0.8" stroke-linejoin="round"/><path d="M536.500 217C520 219.800 500.500 218 493.500 209.500C488 202.500 488 197 491.800 196.600C496.500 196.400 500 204 506.500 209.200C515 215.500 527 216.600 536.500 217Z" fill="#fcfac8" stroke="#ad9658" stroke-width="0.8" stroke-linejoin="round"/><path d="M536.500 216.600C524 215.500 509 210 501 201.500C497 197 493.500 195 490.800 196.800C492 193.500 497 191.800 502 192.800C510 194.500 518 207 536.500 216.600Z" fill="#f9cfb6" stroke="#ad9658" stroke-width="0.8" stroke-linejoin="round"/><path d="M536.500 216.400C521 213 509.500 203 505.500 191.500C503.300 184.500 506 178.200 512.500 177.200C518.500 176.500 522.500 180.500 523.500 186C525 197 529 208 536.500 216.400Z" fill="#f9cdb5" stroke="#ad9658" stroke-width="0.8" stroke-linejoin="round"/></g><path d="M536.600 181C534 176.500 529.500 172 524.500 172.500C520 173 519.500 177.500 522.500 180.500C526 183 531 182 536.600 181Z" fill="#f9cdb5" stroke="#ad9658" stroke-width="0.8" stroke-linejoin="round"/><path d="M536.600 181C539 176.500 544 172 549.500 172.500C554.500 173 555 177.500 552 180.500C548 183 542 182 536.600 181Z" fill="#fcfac8" stroke="#ad9658" stroke-width="0.8" stroke-linejoin="round"/><path d="M535.500 216C526.500 209.500 520 198 521.500 188C522.500 182 525.500 179.500 528 180.500C532 182.500 529 192 530 200C530.800 207 533 212 535.500 216Z" fill="#f9cdb5" stroke="#ad9658" stroke-width="0.8" stroke-linejoin="round"/><path d="M536 216C529 209 525 198.500 526.500 189C527.500 183 531 179.800 534.500 181.500C538 184 534 193 534.500 201C534.800 207.500 535.500 212 536 216Z" fill="#fcfac8" stroke="#ad9658" stroke-width="0.8" stroke-linejoin="round"/><path d="M538.500 216C547 210 555.500 200 556.200 190.500C556.600 184.500 552.500 180 548.500 180.800C544.500 182 546.500 191 545.500 199C544.600 206.500 541.500 212 538.500 216Z" fill="#fcfac8" stroke="#ad9658" stroke-width="0.8" stroke-linejoin="round"/><path d="M531.500 181.500C533 178.500 537 177.300 540.500 178.500C543 179.500 545 181.500 545.500 184L538 186Z" fill="#f9cdb5" stroke="#ad9658" stroke-width="0.8" stroke-linejoin="round"/><path d="M536 184.500C538 181.500 542 181.500 544.500 183.500C546 185 546.500 187 546 188.500L539 188Z" fill="#fcfac8" stroke="#ad9658" stroke-width="0.8" stroke-linejoin="round"/><path d="M537.500 216.200C530.500 214 526 206.500 527 198.500C528 190.500 533.500 185 539.500 185.200C546 185.500 550.800 191.500 550.800 199C550.800 207.500 545 214.500 537.500 216.200Z" fill="#fdfbc9" stroke="#ad9658" stroke-width="0.8" stroke-linejoin="round"/><path d="M533.800 252C524 247.500 512 247.500 501 247.800C491.500 247.800 483 240 480 229.200C488 232.500 497 232.800 505 232.500C517 232.500 528.500 240 533.800 252Z" fill="#8fca8b" stroke="#ad9658" stroke-width="0.8" stroke-linejoin="round"/><path d="M497.500 239.800C507 239 519 241.500 527.500 246.500" fill="none" stroke="#ad9658" stroke-width="0.5" stroke-linejoin="round"/><path d="M535.600 245.600C527.500 241 521.500 233.500 521.700 226.200C528.500 230 534.500 237 535.600 245.600Z" fill="#8fca8b" stroke="#ad9658" stroke-width="0.8" stroke-linejoin="round"/><path d="M536.500 218.500C533 219.500 529.500 221.500 527.200 224.300C531.500 224 535 221.500 536.500 218.500Z" fill="#8fca8b" stroke="#ad9658" stroke-width="0.8" stroke-linejoin="round"/><g transform="translate(1074.4 0) scale(-1 1)"><path d="M533.800 252C524 247.500 512 247.500 501 247.800C491.500 247.800 483 240 480 229.200C488 232.500 497 232.800 505 232.500C517 232.500 528.500 240 533.800 252Z" fill="#8fca8b" stroke="#ad9658" stroke-width="0.8" stroke-linejoin="round"/><path d="M497.500 239.800C507 239 519 241.500 527.500 246.500" fill="none" stroke="#ad9658" stroke-width="0.5" stroke-linejoin="round"/><path d="M535.600 245.600C527.500 241 521.500 233.500 521.700 226.200C528.500 230 534.500 237 535.600 245.600Z" fill="#8fca8b" stroke="#ad9658" stroke-width="0.8" stroke-linejoin="round"/><path d="M536.500 218.500C533 219.500 529.500 221.500 527.200 224.300C531.500 224 535 221.500 536.500 218.500Z" fill="#8fca8b" stroke="#ad9658" stroke-width="0.8" stroke-linejoin="round"/></g><path d="M536.400 218.500L535.800 252C535.500 257 535 261 534.300 264.300C536.200 261 537.600 257 538 252L538.200 218.500Z" fill="#8fca8b" stroke="#ad9658" stroke-width="0.8" stroke-linejoin="round"/></g><text font-family="'Liberation Serif',serif" font-weight="normal" font-size="19.5" fill="#161616" stroke="#161616" stroke-width="0.8" textLength="104.01" lengthAdjust="spacingAndGlyphs"><textPath href="#arcp">Bloom &amp; Grace</textPath></text></svg>
<div class="abs" style="left:372.5px;top:112.3px;width:30px;height:7.2px;border:0.6px solid #f1f0dc;border-radius:2px"></div>
<div class="t" style="left:375px;top:115px;font-size:3.9px;color:#e8e7d3;">AI Generated</div>
<div class="abs" style="left:362.5px;top:103.2px;width:4.3px;height:7.6px;background:#e8e8ea;border-radius:0 3.8px 3.8px 0"></div>
<div class="abs" style="left:705.8px;top:103.2px;width:4.3px;height:7.6px;background:#e8e8ea;border-radius:3.8px 0 0 3.8px"></div>
<div class="abs" style="left:362.5px;top:298.6px;width:4.3px;height:7.6px;background:#e8e8ea;border-radius:0 3.8px 3.8px 0"></div>
<div class="abs" style="left:705.8px;top:298.6px;width:4.3px;height:7.6px;background:#e8e8ea;border-radius:3.8px 0 0 3.8px"></div>
<svg style="left:530.2px;top:315px;" width="13" height="13" viewBox="0 0 13 13"><circle cx="6.5" cy="6.5" r="6.4" fill="#f4f4f4"/><path d="M3.1 6.1A3.5 3.5 0 0 1 9.4 4.4M9.9 6.9A3.5 3.5 0 0 1 3.600 8.600" fill="none" stroke="#222" stroke-width="1.15" /><path d="M8.300 5.400L10.600 5.400L10.200 3.100Z M4.700 7.600L2.400 7.600L2.800 9.900Z" fill="#222"/></svg>
<div class="t" style="left:363.4px;top:380px;font-size:9.5px;color:#1aa9b8;letter-spacing:0.13px;-webkit-text-stroke:0.15px #1aa9b8;">00:00:00:00</div>
<div class="t" style="left:418px;top:380px;font-size:9.5px;color:#4a4a4a;">/</div>
<div class="t" style="left:424.9px;top:380px;font-size:9.5px;color:#c4c4c4;letter-spacing:0.13px;-webkit-text-stroke:0.15px #c4c4c4;">00:00:03:00</div>
<div class="abs" style="left:485.7px;top:378.8px;width:7.6px;height:1.8px;background:#343434;"></div>
<div class="abs" style="left:485.7px;top:381.4px;width:7.6px;height:1.8px;background:#343434;"></div>
<div class="abs" style="left:485.7px;top:384px;width:7.6px;height:1.8px;background:#343434;"></div>
<div class="abs" style="left:485.7px;top:386.6px;width:7.6px;height:1.8px;background:#343434;"></div>
<div class="abs" style="left:485.7px;top:389.2px;width:7.6px;height:1.8px;background:#343434;"></div>
<div class="abs" style="left:495.3px;top:378.8px;width:7.6px;height:1.8px;background:#343434;"></div>
<div class="abs" style="left:495.3px;top:381.4px;width:7.6px;height:1.8px;background:#343434;"></div>
<div class="abs" style="left:495.3px;top:384px;width:7.6px;height:1.8px;background:#343434;"></div>
<div class="abs" style="left:495.3px;top:386.6px;width:7.6px;height:1.8px;background:#343434;"></div>
<div class="abs" style="left:495.3px;top:389.2px;width:7.6px;height:1.8px;background:#343434;"></div>
<svg style="left:533.2px;top:380px;" width="8" height="10" viewBox="0 0 8 10"><path d="M0.300 0.300L7.700 5L0.300 9.700Z" fill="#d6d6d6"/></svg>
<div class="abs" style="left:611.7px;top:379.7px;width:16px;height:10.2px;border:1px solid #c6c6c6;border-radius:1.5px"></div>
<div class="t" style="left:613.7px;top:382px;font-size:7.6px;color:#c6c6c6;letter-spacing:-0.08px;">Full</div>
<svg style="left:637.7px;top:377.7px;" width="14.4" height="14.1" viewBox="0 0 14.4 14.1"><path d="M0.600 3.800V1.600Q0.600 0.600 1.600 0.600H3.600M10.800 0.600H12.800Q13.800 0.600 13.800 1.600V3.800M0.600 10.300V12.500Q0.600 13.500 1.600 13.500H3.600M10.800 13.500H12.800Q13.800 13.500 13.800 12.500V10.300" fill="none" stroke="#c6c6c6" stroke-width="1.2" /><circle cx="6.900" cy="6.800" r="3.300" fill="none" stroke="#c6c6c6" stroke-width="1.200"/><path d="M9.300 9.200L11.300 11.200" fill="none" stroke="#c6c6c6" stroke-width="1.2" /></svg>
<div class="abs" style="left:661.9px;top:379.7px;width:23.1px;height:10.2px;border:1px solid #c6c6c6;border-radius:1.5px"></div>
<div class="t" style="left:664px;top:382px;font-size:7.6px;color:#c6c6c6;letter-spacing:0.31px;">Ratio</div>
<svg style="left:698.6px;top:379.7px;" width="10.8" height="10.5" viewBox="0 0 10.8 10.5"><path d="M0.600 3.400V0.600H3.400M7.400 0.600H10.200V3.400M0.600 7.100V9.900H3.400M10.200 7.100V9.900H7.400" fill="none" stroke="#c6c6c6" stroke-width="1.2" /><path d="M10 0.800L6.500 4.300M0.800 9.700L4.300 6.200" fill="none" stroke="#c6c6c6" stroke-width="1.2" /></svg>
<!-- s_right -->
<div class="panel" style="left:721.2px;top:28.6px;width:295.9px;height:374.6px"></div>
<div class="abs" style="left:721.2px;top:28.6px;width:295.9px;height:33.4px;background:#2f2f2f;border-radius:6px 6px 0 0"></div>
<div class="abs" style="left:721.2px;top:62px;width:295.9px;height:1px;background:#1c1c1c;"></div>
<div class="t" style="left:730.6px;top:41px;font-size:10px;color:#e2e2e2;letter-spacing:-0.04px;-webkit-text-stroke:0.25px #e2e2e2;">AI media</div>
<div class="t" style="left:790.9px;top:41px;font-size:10px;color:#e2e2e2;letter-spacing:0.13px;-webkit-text-stroke:0.25px #e2e2e2;">Video</div>
<div class="t" style="left:837.8px;top:41px;font-size:10px;color:#e2e2e2;letter-spacing:0.15px;-webkit-text-stroke:0.25px #e2e2e2;">Animation</div>
<div class="t" style="left:904.9px;top:41px;font-size:10px;color:#19b6c6;letter-spacing:0.08px;-webkit-text-stroke:0.25px #19b6c6;">Adjust</div>
<div class="t" style="left:954.5px;top:41px;font-size:10px;color:#e2e2e2;letter-spacing:0.03px;-webkit-text-stroke:0.25px #e2e2e2;">AI stylize</div>
<div class="abs" style="left:731px;top:72px;width:276.7px;height:20.2px;background:#1b1b1b;border-radius:4px;"></div>
<div class="abs" style="left:731px;top:72.9px;width:50px;height:19px;background:#3c3c3c;border-radius:4px;"></div>
<div class="t" style="left:745.3px;top:78px;font-size:9px;color:#e6e6e6;letter-spacing:-0.1px;-webkit-text-stroke:0.15px #e6e6e6;">Basic</div>
<div class="t" style="left:795px;top:78px;font-size:9px;color:#cfcfcf;letter-spacing:-0.75px;-webkit-text-stroke:0.15px #cfcfcf;">HSL</div>
<div class="t" style="left:839.6px;top:78px;font-size:9px;color:#cfcfcf;letter-spacing:-0.16px;-webkit-text-stroke:0.15px #cfcfcf;">Curves</div>
<div class="t" style="left:895.8px;top:78px;font-size:9px;color:#cfcfcf;letter-spacing:0.04px;-webkit-text-stroke:0.15px #cfcfcf;">Color wheel</div>
<div class="t" style="left:972px;top:78px;font-size:9px;color:#cfcfcf;letter-spacing:-0.17px;-webkit-text-stroke:0.15px #cfcfcf;">Mask</div>
<div class="abs" style="left:731px;top:101px;width:276.7px;height:1px;background:#383838;"></div>
<div class="abs" style="left:921.1px;top:102px;width:43px;height:6.9px;background:#1e1e1e;border-radius:0 0 3px 3px"></div>
<div class="abs" style="left:965.6px;top:102px;width:12.1px;height:6.9px;background:#2f2f2f;border-radius:0 0 3px 3px"></div>
<div class="abs" style="left:900.3px;top:102px;width:6px;height:3.8px;background:#4a4a4a;border-radius:0 0 3px 3px"></div>
<div class="abs" style="left:930px;top:102px;width:30px;height:3px;overflow:hidden"><div class="t" style="left:7px;top:-5px;font-size:9px;color:#5a5a5a">100</div></div>
<svg style="left:968.6px;top:102.3px;" width="6.2" height="3.4" viewBox="0 0 6.2 3.4"><path d="M0.700 0.400L3.100 2.800L5.500 0.400" fill="none" stroke="#7a7a7a" stroke-width="1.1" /></svg>
<svg style="left:989.6px;top:102px;" width="9.4" height="4.2" viewBox="0 0 9.4 4.2"><path d="M1.400 0L4.700 3.400L8 0" fill="none" stroke="#6a6a6a" stroke-width="1.1" /></svg>
<svg style="left:983.5px;top:102px;" width="2.4" height="2" viewBox="0 0 2.4 2"><path d="M0 0L2 1.800" fill="none" stroke="#444" stroke-width="1" /></svg>
<svg style="left:1003px;top:102px;" width="2.4" height="2" viewBox="0 0 2.4 2"><path d="M2.400 0L0.400 1.800" fill="none" stroke="#444" stroke-width="1" /></svg>
<div class="t" style="left:731.6px;top:123px;font-size:9px;color:#e0e0e0;letter-spacing:0.04px;-webkit-text-stroke:0.15px #e0e0e0;">Protect skin tone</div>
<div class="t" style="left:731.6px;top:133px;font-size:9px;color:#858585;letter-spacing:0px;">Turn it on to make skin tones more natural.</div>
<div class="abs" style="left:968.6px;top:126.1px;width:29.2px;height:13.5px;background:#414141;border-radius:6.75px;"></div>
<div class="abs" style="left:971.9px;top:129.8px;width:6.2px;height:6.2px;background:#fff;border-radius:3.1px;"></div>
<div class="abs" style="left:731px;top:156px;width:276.7px;height:1px;background:#333;"></div>
<div class="abs" style="left:731px;top:173.6px;width:10px;height:10.2px;background:#18bccb;border-radius:2.2px;"></div>
<svg style="left:733px;top:176.3px;" width="6" height="5" viewBox="0 0 6 5"><path d="M0.700 2.500L2.300 4L5.300 0.800" fill="none" stroke="#fff" stroke-width="1.3" /></svg>
<div class="t" style="left:747.6px;top:174px;font-size:9.2px;color:#eaeaea;letter-spacing:0.09px;-webkit-text-stroke:0.3px #eaeaea;">Adjust</div>
<svg style="left:777.7px;top:177.8px;" width="5.6" height="3.4" viewBox="0 0 5.6 3.4"><path d="M2.800 0L5.600 3.400H0Z" fill="#cfcfcf"/></svg>
<svg style="left:961px;top:173.3px;" width="10.6" height="10.6" viewBox="0 0 10.6 10.6"><path d="M0.800 4.500A4.600 4.600 0 1 1 1.800 8.300" fill="none" stroke="#cdcdcd" stroke-width="1.25" /><path d="M-0.300 2.300L0.800 4.700L3.200 3.700" fill="none" stroke="#cdcdcd" stroke-width="1.2" stroke-linejoin="round"/></svg>
<svg style="left:982.2px;top:174.4px;" width="4" height="7.8" viewBox="0 0 4 7.8"><path d="M3.500 0.500L0.600 3.900L3.500 7.300" fill="none" stroke="#4c4c4c" stroke-width="1.1" /></svg>
<svg style="left:989.1px;top:173.3px;" width="10" height="10" viewBox="0 0 10 10"><path d="M5 0.700L9.300 5L5 9.300L0.700 5Z" fill="none" stroke="#c6c6c6" stroke-width="1.1" stroke-linejoin="round"/></svg>
<svg style="left:1002.2px;top:174.4px;" width="4" height="7.8" viewBox="0 0 4 7.8"><path d="M0.500 0.500L3.400 3.900L0.500 7.300" fill="none" stroke="#4c4c4c" stroke-width="1.1" /></svg>
<div class="t" style="left:731.6px;top:202px;font-size:9px;color:#a8a8a8;letter-spacing:0.05px;">Color</div>
<div class="abs" style="left:731px;top:219px;width:276.7px;height:1px;background:#333;"></div>
<div class="t" style="left:731.6px;top:231px;font-size:9px;color:#dcdcdc;letter-spacing:-0.14px;-webkit-text-stroke:0.15px #dcdcdc;">Temp</div>
<div class="abs" style="left:731px;top:247.95px;width:175.4px;height:1.5px;border-radius:1px;background:linear-gradient(90deg,#2040f0 0%,#3352d8 25%,#8a8a8a 50%,#cfc040 70%,#f0dc14 100%)"></div>
<div class="abs" style="left:818.4px;top:245.1px;width:1px;height:7.2px;background:#e6e6e6;"></div>
<div class="abs" style="left:840.8px;top:243.9px;width:6.8px;height:9.8px;background:#fff;border-radius:2.2px;"></div>
<div class="abs" style="left:921.1px;top:240.1px;width:43px;height:17.6px;background:#1c1c1c;border-radius:3px;"></div>
<div class="t" style="left:942.6px;top:245px;font-size:9px;color:#e4e4e4;transform:translateX(-50%);">15</div>
<div class="abs" style="left:965.6px;top:240.1px;width:12.1px;height:17.6px;background:#3a3a3a;border-radius:3px;"></div>
<svg style="left:968.6px;top:243.5px;" width="6.2" height="10.4" viewBox="0 0 6.2 10.4"><path d="M0.700 3.600L3.100 1.100L5.500 3.600M0.700 6.800L3.100 9.300L5.500 6.800" fill="none" stroke="#f0f0f0" stroke-width="1.25" /></svg>
<svg style="left:982.2px;top:245px;" width="4" height="7.8" viewBox="0 0 4 7.8"><path d="M3.500 0.500L0.600 3.900L3.500 7.300" fill="none" stroke="#4c4c4c" stroke-width="1.1" /></svg>
<svg style="left:989.1px;top:243.9px;" width="10" height="10" viewBox="0 0 10 10"><path d="M5 0.700L9.300 5L5 9.300L0.700 5Z" fill="none" stroke="#c6c6c6" stroke-width="1.1" stroke-linejoin="round"/></svg>
<svg style="left:1002.2px;top:245px;" width="4" height="7.8" viewBox="0 0 4 7.8"><path d="M0.500 0.500L3.400 3.900L0.500 7.300" fill="none" stroke="#4c4c4c" stroke-width="1.1" /></svg>
<div class="t" style="left:731.6px;top:265px;font-size:9px;color:#dcdcdc;letter-spacing:-0.06px;-webkit-text-stroke:0.15px #dcdcdc;">Tint</div>
<div class="abs" style="left:731px;top:282.35px;width:175.4px;height:1.5px;border-radius:1px;background:linear-gradient(90deg,#46c81e 0%,#5a9a3c 30%,#8a8a8a 50%,#c83cc8 70%,#e614e6 100%)"></div>
<div class="abs" style="left:818.4px;top:279.5px;width:1px;height:7.2px;background:#e6e6e6;"></div>
<div class="abs" style="left:786.7px;top:278.3px;width:6.8px;height:9.8px;background:#fff;border-radius:2.2px;"></div>
<div class="abs" style="left:921.1px;top:274.5px;width:43px;height:17.6px;background:#1c1c1c;border-radius:3px;"></div>
<div class="t" style="left:942.6px;top:279px;font-size:9px;color:#e4e4e4;transform:translateX(-50%);">-17</div>
<div class="abs" style="left:965.6px;top:274.5px;width:12.1px;height:17.6px;background:#3a3a3a;border-radius:3px;"></div>
<svg style="left:968.6px;top:277.9px;" width="6.2" height="10.4" viewBox="0 0 6.2 10.4"><path d="M0.700 3.600L3.100 1.100L5.500 3.600M0.700 6.800L3.100 9.300L5.500 6.800" fill="none" stroke="#f0f0f0" stroke-width="1.25" /></svg>
<svg style="left:982.2px;top:279.4px;" width="4" height="7.8" viewBox="0 0 4 7.8"><path d="M3.500 0.500L0.600 3.900L3.500 7.300" fill="none" stroke="#4c4c4c" stroke-width="1.1" /></svg>
<svg style="left:989.1px;top:278.3px;" width="10" height="10" viewBox="0 0 10 10"><path d="M5 0.700L9.300 5L5 9.300L0.700 5Z" fill="none" stroke="#c6c6c6" stroke-width="1.1" stroke-linejoin="round"/></svg>
<svg style="left:1002.2px;top:279.4px;" width="4" height="7.8" viewBox="0 0 4 7.8"><path d="M0.500 0.500L3.400 3.900L0.500 7.300" fill="none" stroke="#4c4c4c" stroke-width="1.1" /></svg>
<div class="t" style="left:731.6px;top:299px;font-size:9px;color:#dcdcdc;letter-spacing:-0.05px;-webkit-text-stroke:0.15px #dcdcdc;">Saturation</div>
<div class="abs" style="left:731px;top:316.75px;width:175.4px;height:1.5px;border-radius:1px;background:linear-gradient(90deg,#333 0%,#6a2a2a 35%,#c01818 65%,#f40c0c 100%)"></div>
<div class="abs" style="left:815.6px;top:312.7px;width:6.8px;height:9.8px;background:#fff;border-radius:2.2px;"></div>
<div class="abs" style="left:921.1px;top:308.9px;width:43px;height:17.6px;background:#1c1c1c;border-radius:3px;"></div>
<div class="t" style="left:942.6px;top:314px;font-size:9px;color:#e4e4e4;transform:translateX(-50%);">0</div>
<div class="abs" style="left:965.6px;top:308.9px;width:12.1px;height:17.6px;background:#3a3a3a;border-radius:3px;"></div>
<svg style="left:968.6px;top:312.3px;" width="6.2" height="10.4" viewBox="0 0 6.2 10.4"><path d="M0.700 3.600L3.100 1.100L5.500 3.600M0.700 6.800L3.100 9.300L5.500 6.800" fill="none" stroke="#f0f0f0" stroke-width="1.25" /></svg>
<svg style="left:982.2px;top:313.8px;" width="4" height="7.8" viewBox="0 0 4 7.8"><path d="M3.500 0.500L0.600 3.900L3.500 7.300" fill="none" stroke="#4c4c4c" stroke-width="1.1" /></svg>
<svg style="left:989.1px;top:312.7px;" width="10" height="10" viewBox="0 0 10 10"><path d="M5 0.700L9.300 5L5 9.300L0.700 5Z" fill="none" stroke="#c6c6c6" stroke-width="1.1" stroke-linejoin="round"/></svg>
<svg style="left:1002.2px;top:313.8px;" width="4" height="7.8" viewBox="0 0 4 7.8"><path d="M0.500 0.500L3.400 3.900L0.500 7.300" fill="none" stroke="#4c4c4c" stroke-width="1.1" /></svg>
<div class="t" style="left:731.6px;top:339px;font-size:9px;color:#8c8c8c;letter-spacing:0.11px;">Lightness</div>
<div class="abs" style="left:731px;top:355px;width:276.7px;height:1px;background:#333;"></div>
<div class="t" style="left:731.6px;top:367px;font-size:9px;color:#dcdcdc;letter-spacing:-0.2px;-webkit-text-stroke:0.15px #dcdcdc;">Exposure</div>
<div class="abs" style="left:721.2px;top:374.2px;width:295.9px;height:29px;background:#2b2b2b;border-radius:0 0 6px 6px"></div>
<div class="abs" style="left:873px;top:379.3px;width:70px;height:17.5px;background:#14bccb;border-radius:3px;"></div>
<div class="t" style="left:878.4px;top:383px;font-size:9px;color:#fff;letter-spacing:-0.03px;-webkit-text-stroke:0.35px #fff;">Save as preset</div>
<div class="abs" style="left:949.7px;top:379.3px;width:57.4px;height:17.5px;background:#454545;border-radius:3px;"></div>
<div class="t" style="left:955.1px;top:383px;font-size:9px;color:#f0f0f0;letter-spacing:0.23px;-webkit-text-stroke:0.2px #f0f0f0;">Apply to all</div>
<!-- s_timeline -->
<div class="panel" style="left:7px;top:406.9px;width:1010px;height:315.9px;border-radius:1px 1px 3px 3px"></div>
<div class="abs" style="left:7px;top:433px;width:1010px;height:2px;background:#1f1f1f;"></div>
<svg style="left:15.6px;top:414.6px;" width="9" height="11.4" viewBox="0 0 9 11.4"><path d="M0.700 0.700V9.500L3 7.500L4.600 10.700L6.300 9.900L4.800 6.800L8.200 6.300Z" fill="none" stroke="#dcdcdc" stroke-width="1.2" stroke-linejoin="round"/></svg>
<svg style="left:34.8px;top:418.9px;" width="6.6" height="3.9" viewBox="0 0 6.6 3.9"><path d="M0.600 0.600L3.300 3.100L6 0.600" fill="none" stroke="#f0f0f0" stroke-width="1.4" /></svg>
<div class="abs" style="left:52px;top:413.7px;width:1px;height:13px;background:#383838;"></div>
<svg style="left:64px;top:415.6px;" width="10.2" height="10" viewBox="0 0 10.2 10"><path d="M3.300 0.600L0.800 3.100L3.300 5.600M0.900 3.100H6.400A3.100 3.100 0 0 1 6.400 9.300H0.800" fill="none" stroke="#dcdcdc" stroke-width="1.25" /></svg>
<div class="abs" style="left:89.2px;top:411px;width:17.2px;height:18px;background:#2a2a2a;border-radius:3px;"></div>
<svg style="left:92.2px;top:415.6px;" width="10.2" height="10" viewBox="0 0 10.2 10"><path d="M6.900 0.600L9.400 3.100L6.900 5.600M9.300 3.100H3.800A3.100 3.100 0 0 0 3.800 9.300H9.400" fill="none" stroke="#4c4c4c" stroke-width="1.25" /></svg>
<svg style="left:121.5px;top:415.5px;" width="9.6" height="9.6" viewBox="0 0 9.6 9.6"><path d="M0.200 0.800H2.600Q3.400 0.800 3.400 1.600V8Q3.400 8.800 2.600 8.800H0.200" fill="none" stroke="#dcdcdc" stroke-width="1.5" /><path d="M9.400 0.800H7Q6.200 0.800 6.200 1.600V8Q6.200 8.800 7 8.800H9.400" fill="none" stroke="#dcdcdc" stroke-width="1.5" /></svg>
<svg style="left:150.6px;top:415.5px;" width="9.6" height="9.6" viewBox="0 0 9.6 9.6"><path d="M0.200 0.800H2.600Q3.400 0.800 3.400 1.600V8Q3.400 8.800 2.600 8.800H0.200" fill="none" stroke="#5e5e5e" stroke-width="1.3" stroke-dasharray="1.500 1.200"/><path d="M9.400 0.800H7Q6.200 0.800 6.200 1.600V8Q6.200 8.800 7 8.800H9.400" fill="none" stroke="#dcdcdc" stroke-width="1.5" /></svg>
<svg style="left:179.3px;top:415.5px;" width="9.6" height="9.6" viewBox="0 0 9.6 9.6"><path d="M0.200 0.800H2.600Q3.400 0.800 3.400 1.600V8Q3.400 8.800 2.600 8.800H0.200" fill="none" stroke="#dcdcdc" stroke-width="1.5" /><path d="M9.400 0.800H7Q6.200 0.800 6.200 1.600V8Q6.200 8.800 7 8.800H9.400" fill="none" stroke="#5e5e5e" stroke-width="1.3" stroke-dasharray="1.500 1.200"/></svg>
<svg style="left:207.7px;top:414.2px;" width="10.9" height="11.6" viewBox="0 0 10.9 11.6"><path d="M0.200 3.100H10.700M3.700 2.900V1.200Q3.700 0.700 4.200 0.700H6.700Q7.200 0.700 7.200 1.200V2.900M1.700 3.300V9.600Q1.700 10.900 3 10.900H7.900Q9.200 10.900 9.200 9.600V3.300" fill="none" stroke="#dcdcdc" stroke-width="1.4" /></svg>
<svg style="left:237.1px;top:415.1px;" width="9.3" height="10" viewBox="0 0 9.3 10"><path d="M0.800 0.800H8.500V5.900L4.650 9.200L0.800 5.900Z" fill="none" stroke="#dcdcdc" stroke-width="1.4" stroke-linejoin="round"/></svg>
<svg style="left:264px;top:413.7px;" width="13" height="12.8" viewBox="0 0 13 12.8"><path d="M3.200 0.600L0.900 2.700L3.200 4.800M0.900 2.700H9.600Q10.800 2.700 10.800 3.900V8.200" fill="none" stroke="#dcdcdc" stroke-width="1.25" stroke-linejoin="round"/><path d="M2.600 4.600V9Q2.600 10.200 3.800 10.200H12.100M9.900 8.100L12.200 10.200L9.900 12.300" fill="none" stroke="#dcdcdc" stroke-width="1.25" stroke-linejoin="round"/><path d="M5.700 7.500L7.500 5.600" fill="none" stroke="#dcdcdc" stroke-width="1" /></svg>
<svg style="left:293px;top:415.2px;" width="12.5" height="9.8" viewBox="0 0 12.5 9.8"><path d="M4.900 0.600V9.200H0.700Z M7.600 0.600V9.200H11.800Z" fill="none" stroke="#dcdcdc" stroke-width="1.15" stroke-linejoin="round"/></svg>
<svg style="left:322px;top:414.3px;" width="12" height="11.8" viewBox="0 0 12 11.8"><path d="M1.300 5.300A4.700 4.700 0 0 1 9.500 2.700M10.700 6.500A4.700 4.700 0 0 1 2.500 9.100" fill="none" stroke="#dcdcdc" stroke-width="1.3" /><path d="M9.800 0.300V3H7.100M2.200 11.500V8.800H4.900" fill="none" stroke="#dcdcdc" stroke-width="1.2" /></svg>
<div class="abs" style="left:347.4px;top:413.7px;width:1px;height:13px;background:#383838;"></div>
<div class="abs" style="left:361.1px;top:415.8px;width:12.2px;height:9.3px;background:#e2e2e2;border-radius:2px;"></div>
<div class="t" style="left:362.6px;top:418px;font-size:6.2px;color:#222;font-weight:bold;letter-spacing:0.04px;">HD</div>
<svg style="left:389.3px;top:413.7px;" width="13.3" height="12.3" viewBox="0 0 13.3 12.3"><g transform="rotate(-45 5.800 8)"><rect x="0.300" y="6.300" width="11" height="3.400" rx="1" fill="#dcdcdc"/><rect x="7.300" y="7.300" width="2.600" height="1.400" fill="#252525"/></g><path d="M2.500 0L3.200 1.800L5 2.500L3.200 3.200L2.500 5L1.800 3.200L0 2.500L1.800 1.800Z M11.300 7.300L11.800 8.700L13.200 9.200L11.800 9.700L11.300 11.100L10.800 9.700L9.400 9.200L10.800 8.700Z M11.600 0L12 1L13 1.400L12 1.800L11.600 2.800L11.200 1.800L10.200 1.400L11.200 1Z" fill="#dcdcdc"/></svg>
<svg style="left:418.7px;top:413.7px;" width="13" height="12.3" viewBox="0 0 13 12.3"><circle cx="6.500" cy="5.600" r="2.500" fill="#dcdcdc"/><path d="M1.300 12.300Q1.500 8.800 6.500 8.800Q11.500 8.800 11.700 12.300Z" fill="#dcdcdc"/><path d="M1.800 1.300L2.300 2.700L3.700 3.200L2.300 3.700L1.800 5.100L1.300 3.700L-0.100 3.200L1.300 2.700Z M11.300 0.300L11.800 1.700L13.200 2.200L11.800 2.700L11.300 4.100L10.800 2.700L9.400 2.200L10.800 1.700Z" fill="#dcdcdc"/></svg>
<svg style="left:668.3px;top:414.7px;" width="9.2" height="11.4" viewBox="0 0 9.2 11.4"><rect x="2.700" y="0.600" width="3.800" height="6.600" rx="1.900" fill="none" stroke="#dcdcdc" stroke-width="1.200"/><path d="M0.600 5.200A4 4 0 0 0 8.600 5.200M4.600 9.200V11.100" fill="none" stroke="#dcdcdc" stroke-width="1.2" /></svg>
<div class="abs" style="left:692.2px;top:407px;width:1px;height:13.5px;background:#343434;"></div>
<div class="abs" style="left:702.6px;top:410.9px;width:18.7px;height:18.4px;background:#1b1b1b;border-radius:3px;"></div>
<svg style="left:706px;top:417px;" width="12.6" height="6.4" viewBox="0 0 12.6 6.4"><rect x="0" y="0.300" width="4.800" height="5.800" rx="1.200" fill="#17c0d0"/><path d="M4.800 3.200H8.300M7 1.900L8.300 3.200L7 4.500" fill="none" stroke="#17c0d0" stroke-width="1.1" /><path d="M9 1H10.600Q11.900 1 11.900 2.200V4.200Q11.900 5.400 10.600 5.400H9" fill="none" stroke="#17c0d0" stroke-width="1.5" /></svg>
<div class="abs" style="left:731.2px;top:410.9px;width:18.7px;height:18.4px;background:#1b1b1b;border-radius:3px;"></div>
<svg style="left:734px;top:413.5px;" width="13.2" height="13.4" viewBox="0 0 13.2 13.4"><rect x="0.300" y="3.600" width="12.600" height="6.200" rx="1.400" fill="#17c0d0"/><path d="M6.600 4.800V8.600" fill="none" stroke="#1b1b1b" stroke-width="1.2" /><path d="M6.600 0.300V2M3.300 0.900L4.200 2.300M9.900 0.900L9 2.300M6.600 13.100V11.400M3.300 12.500L4.200 11.100M9.900 12.500L9 11.100" fill="none" stroke="#17c0d0" stroke-width="1" /></svg>
<div class="abs" style="left:760px;top:410.9px;width:18.9px;height:18.4px;background:#1b1b1b;border-radius:3px 0 0 3px"></div>
<div class="abs" style="left:778.9px;top:410.9px;width:11.3px;height:18.4px;background:#111;border-radius:0 3px 3px 0"></div>
<svg style="left:763.2px;top:416.8px;" width="12.8" height="6.8" viewBox="0 0 12.8 6.8"><path d="M5.300 1H2.600Q0.900 1 0.900 3.400Q0.900 5.800 2.600 5.800H5.300M7.500 1H10.200Q11.900 1 11.900 3.400Q11.900 5.800 10.200 5.800H7.500" fill="none" stroke="#17c0d0" stroke-width="1.8" /><path d="M4.300 3.400H8.500" fill="none" stroke="#17c0d0" stroke-width="1.5" /></svg>
<svg style="left:781.6px;top:418.6px;" width="6" height="3.8" viewBox="0 0 6 3.8"><path d="M0.600 0.600L3 3L5.400 0.600" fill="none" stroke="#f0f0f0" stroke-width="1.4" /></svg>
<svg style="left:802.1px;top:415.8px;" width="15" height="10.7" viewBox="0 0 15 10.7"><path d="M5.400 1.700H0.600V7.300H5.400M9.600 1.700H14.400V4.600" fill="none" stroke="#dcdcdc" stroke-width="1.2" /><path d="M7.500 0V9.300" fill="none" stroke="#dcdcdc" stroke-width="1.2" /><path d="M9.800 5.200V10.600L11.300 9.400L12.400 11.200L13.400 10.600L12.400 8.900L14.200 8.600Z" fill="#dcdcdc"/></svg>
<svg style="left:822.8px;top:418.9px;" width="6.2" height="3.9" viewBox="0 0 6.2 3.9"><path d="M0.600 0.600L3.100 3.100L5.600 0.600" fill="none" stroke="#f0f0f0" stroke-width="1.4" /></svg>
<div class="abs" style="left:840px;top:407px;width:1px;height:13.5px;background:#343434;"></div>
<svg style="left:852.6px;top:415.7px;" width="14.7" height="9.8" viewBox="0 0 14.7 9.8"><path d="M4.400 6.800H1.600Q0.600 6.800 0.600 5.800V1.600Q0.600 0.600 1.600 0.600H13.100Q14.100 0.600 14.100 1.600V5.800Q14.100 6.800 13.100 6.800H12.400" fill="none" stroke="#dcdcdc" stroke-width="1.2" /><path d="M3.600 0.800V3M6.200 0.800V2.400M8.800 0.800V2.400M11.400 0.800V3" fill="none" stroke="#dcdcdc" stroke-width="1" /><circle cx="8.200" cy="6.600" r="2.200" fill="none" stroke="#dcdcdc" stroke-width="1.100"/><path d="M9.800 8.200L11.300 9.700" fill="none" stroke="#dcdcdc" stroke-width="1.1" /></svg>
<svg style="left:883.1px;top:414.7px;" width="12.6" height="12" viewBox="0 0 12.6 12"><circle cx="5.900" cy="5.600" r="5.100" fill="none" stroke="#dcdcdc" stroke-width="1.200"/><path d="M3.600 5.600H8.200" fill="none" stroke="#dcdcdc" stroke-width="1.2" /><path d="M9.800 9.400L11.600 11.200" fill="none" stroke="#dcdcdc" stroke-width="1.1" /></svg>
<div class="abs" style="left:908.3px;top:419.4px;width:76.4px;height:1.7px;background:#0b0b0b;border-radius:1px;"></div>
<div class="abs" style="left:908.3px;top:419.4px;width:16px;height:1.7px;background:#f0f0f0;border-radius:1px;"></div>
<div class="abs" style="left:922.2px;top:415.1px;width:6.3px;height:10.1px;background:#fff;border-radius:2.2px;"></div>
<svg style="left:998px;top:414.7px;" width="12.6" height="12" viewBox="0 0 12.6 12"><circle cx="5.900" cy="5.600" r="5.100" fill="none" stroke="#dcdcdc" stroke-width="1.200"/><path d="M3.600 5.600H8.200M5.900 3.300V7.900" fill="none" stroke="#dcdcdc" stroke-width="1.2" /><path d="M9.800 9.400L11.600 11.200" fill="none" stroke="#dcdcdc" stroke-width="1.1" /></svg>
<div class="abs" style="left:147px;top:434px;width:310.5px;height:1px;background:#473a11;"></div>
<div class="t" style="left:150.5px;top:437px;font-size:8.8px;color:#535353;letter-spacing:-0.25px;">00:00</div>
<div class="abs" style="left:187.26px;top:436.3px;width:1px;height:3.6px;background:#404040;"></div>
<div class="abs" style="left:207.99px;top:436.3px;width:1px;height:3.6px;background:#404040;"></div>
<div class="abs" style="left:228.72px;top:436.3px;width:1px;height:3.6px;background:#404040;"></div>
<div class="abs" style="left:249.45px;top:436.3px;width:1px;height:3.6px;background:#404040;"></div>
<div class="abs" style="left:270.18px;top:436.3px;width:1px;height:3.6px;background:#404040;"></div>
<div class="abs" style="left:290.91px;top:436.3px;width:1px;height:3.6px;background:#404040;"></div>
<div class="abs" style="left:311.64px;top:436.3px;width:1px;height:3.6px;background:#404040;"></div>
<div class="abs" style="left:332.37px;top:436.3px;width:1px;height:3.6px;background:#404040;"></div>
<div class="abs" style="left:353.1px;top:437.3px;width:1.2px;height:7.6px;background:#6c6c6c;"></div>
<div class="t" style="left:357.8px;top:437px;font-size:8.8px;color:#535353;letter-spacing:-0.25px;">00:02</div>
<div class="abs" style="left:394.56px;top:436.3px;width:1px;height:3.6px;background:#404040;"></div>
<div class="abs" style="left:415.29px;top:436.3px;width:1px;height:3.6px;background:#404040;"></div>
<div class="abs" style="left:436.02px;top:436.3px;width:1px;height:3.6px;background:#404040;"></div>
<div class="abs" style="left:456.75px;top:436.3px;width:1px;height:3.6px;background:#404040;"></div>
<div class="abs" style="left:477.48px;top:436.3px;width:1px;height:3.6px;background:#404040;"></div>
<div class="abs" style="left:498.21px;top:436.3px;width:1px;height:3.6px;background:#404040;"></div>
<div class="abs" style="left:518.94px;top:436.3px;width:1px;height:3.6px;background:#404040;"></div>
<div class="abs" style="left:539.67px;top:436.3px;width:1px;height:3.6px;background:#404040;"></div>
<div class="abs" style="left:560.4px;top:437.3px;width:1.2px;height:7.6px;background:#6c6c6c;"></div>
<div class="t" style="left:565.1px;top:437px;font-size:8.8px;color:#535353;letter-spacing:-0.25px;">00:04</div>
<div class="abs" style="left:601.86px;top:436.3px;width:1px;height:3.6px;background:#404040;"></div>
<div class="abs" style="left:622.59px;top:436.3px;width:1px;height:3.6px;background:#404040;"></div>
<div class="abs" style="left:643.32px;top:436.3px;width:1px;height:3.6px;background:#404040;"></div>
<div class="abs" style="left:664.05px;top:436.3px;width:1px;height:3.6px;background:#404040;"></div>
<div class="abs" style="left:684.78px;top:436.3px;width:1px;height:3.6px;background:#404040;"></div>
<div class="abs" style="left:705.51px;top:436.3px;width:1px;height:3.6px;background:#404040;"></div>
<div class="abs" style="left:726.24px;top:436.3px;width:1px;height:3.6px;background:#404040;"></div>
<div class="abs" style="left:746.97px;top:436.3px;width:1px;height:3.6px;background:#404040;"></div>
<div class="abs" style="left:767.7px;top:437.3px;width:1.2px;height:7.6px;background:#6c6c6c;"></div>
<div class="t" style="left:772.4px;top:437px;font-size:8.8px;color:#535353;letter-spacing:-0.25px;">00:06</div>
<div class="abs" style="left:809.16px;top:436.3px;width:1px;height:3.6px;background:#404040;"></div>
<div class="abs" style="left:829.89px;top:436.3px;width:1px;height:3.6px;background:#404040;"></div>
<div class="abs" style="left:850.62px;top:436.3px;width:1px;height:3.6px;background:#404040;"></div>
<div class="abs" style="left:871.35px;top:436.3px;width:1px;height:3.6px;background:#404040;"></div>
<div class="abs" style="left:892.08px;top:436.3px;width:1px;height:3.6px;background:#404040;"></div>
<div class="abs" style="left:912.81px;top:436.3px;width:1px;height:3.6px;background:#404040;"></div>
<div class="abs" style="left:933.54px;top:436.3px;width:1px;height:3.6px;background:#404040;"></div>
<div class="abs" style="left:954.27px;top:436.3px;width:1px;height:3.6px;background:#404040;"></div>
<div class="abs" style="left:975px;top:437.3px;width:1.2px;height:7.6px;background:#6c6c6c;"></div>
<div class="t" style="left:979.7px;top:437px;font-size:8.8px;color:#535353;letter-spacing:-0.25px;">00:08</div>
<div class="abs" style="left:106.4px;top:456px;width:1px;height:266.8px;background:#1c1c1c;"></div>
<div class="abs" style="left:7px;top:554.3px;width:1005px;height:61.3px;background:#2e2e2e;"></div>
<div class="abs" style="left:106.4px;top:554.3px;width:1px;height:61.3px;background:#232323;"></div>
<svg style="left:13.5px;top:581.7px;" width="10" height="7.2" viewBox="0 0 10 7.2"><rect x="0.500" y="0.500" width="9" height="6.200" rx="0.800" fill="none" stroke="#8a8a8a" stroke-width="0.900"/><path d="M4 2.200L6.400 3.600L4 5Z" fill="#8a8a8a"/></svg>
<svg style="left:34.2px;top:581px;" width="7" height="8" viewBox="0 0 7 8"><rect x="0.300" y="3.500" width="6.400" height="4.300" rx="0.900" fill="#e6e6e6"/><path d="M1.700 3.600V2.400A1.800 1.800 0 0 1 5.300 2.400V3.600" fill="none" stroke="#e6e6e6" stroke-width="1.1" /><rect x="2.100" y="5.200" width="2.800" height="1" fill="#2e2e2e"/></svg>
<svg style="left:52.2px;top:581.7px;" width="9.4" height="6.8" viewBox="0 0 9.4 6.8"><path d="M0.500 3.400Q4.700 -1.600 8.900 3.400Q4.700 8.400 0.500 3.400Z" fill="none" stroke="#e6e6e6" stroke-width="1.1" /><circle cx="4.700" cy="3.400" r="1.500" fill="#e6e6e6"/></svg>
<svg style="left:71.2px;top:581.2px;" width="9.6" height="7.8" viewBox="0 0 9.6 7.8"><path d="M0.600 2.600H2.200L4.600 0.700V7.100L2.200 5.200H0.600Z" fill="none" stroke="#e6e6e6" stroke-width="1.05" stroke-linejoin="round"/><path d="M6.300 2.200V5.600M8.300 1.200V6.600" fill="none" stroke="#e6e6e6" stroke-width="1.05" /></svg>
<div class="abs" style="left:90.9px;top:584.5px;width:1.9px;height:1.9px;background:#d4d4d4;border-radius:0.95px;"></div>
<div class="abs" style="left:94.1px;top:584.5px;width:1.9px;height:1.9px;background:#d4d4d4;border-radius:0.95px;"></div>
<div class="abs" style="left:97.3px;top:584.5px;width:1.9px;height:1.9px;background:#d4d4d4;border-radius:0.95px;"></div>
<div class="abs" style="left:109.800px;top:570px;width:30.200px;height:30.500px;background:#3a3a3a;border-radius:4px;border:0.6px dashed #4a4a4a"></div>
<svg style="left:120.6px;top:575.2px;" width="8.8" height="9.6" viewBox="0 0 8.8 9.6"><path d="M1 6.600L5.800 1.300L7.600 3L2.800 8.200L0.800 8.500Z" fill="none" stroke="#e8e8e8" stroke-width="1.05" stroke-linejoin="round"/><path d="M1 9.200H8" fill="none" stroke="#e8e8e8" stroke-width="1.05" /></svg>
<div class="t" style="left:114.3px;top:588px;font-size:8.2px;color:#e2e2e2;letter-spacing:-0.17px;">Cover</div>
<div class="abs" style="left:144.4px;top:556.6px;width:313.8px;height:57.3px;background:#0a4f56;border-radius:3px;border:1px solid #f4f4f4;overflow:hidden"></div>
<div class="abs" style="left:145.4px;top:570.3px;width:311.8px;height:30.5px;background:#fff;"></div>
<div class="abs" style="left:145.4px;top:607.6px;width:311.8px;height:1px;background:#176b72;"></div>
<div class="abs" style="left:144.4px;top:558.6px;width:2.4px;height:53.3px;background:#f4f4f4;"></div>
<div class="abs" style="left:162.7px;top:558px;width:34.3px;height:10.2px;background:#14606a;border-radius:1.5px;"></div>
<div class="abs" style="left:201px;top:558px;width:50px;height:10.2px;background:#14606a;border-radius:1.5px;"></div>
<div class="abs" style="left:150.2px;top:558px;width:11.2px;height:10.2px;background:#10585f;border-radius:1.5px;"></div>
<svg style="left:151.2px;top:559.3px;" width="8.2" height="8.2" viewBox="0 0 8.2 8.2"><path d="M4.100 0.500Q4.500 3.700 7.700 4.100Q4.500 4.500 4.100 7.700Q3.700 4.500 0.500 4.100Q3.700 3.700 4.100 0.500Z" fill="none" stroke="#fff" stroke-width="1.05" stroke-linejoin="round"/></svg>
<div class="t" style="left:164.3px;top:559px;font-size:8px;color:#e8f4f4;letter-spacing:-0.05px;">AI media</div>
<div class="t" style="left:202.8px;top:559px;font-size:8px;color:#e8f4f4;letter-spacing:0.39px;">00:00:03:00</div>
<div class="abs" style="left:145.4px;top:570.300px;width:311.8px;height:30.500px;overflow:hidden"><svg style="left:-145.4px;top:-570.300px" width="1024" height="730" viewBox="0 0 1024 730"><g transform="translate(167.5 587.400) scale(0.166) translate(-537.200 -217.500)" opacity="0.72"><use href="#bigflower"/></g><path d="M160.2 581.300Q167.5 575.600 174.8 581.300" fill="none" stroke="#4a4a4a" stroke-width="1.300" stroke-dasharray="1.300 0.500" opacity="0.85"/><g transform="translate(207.45 587.400) scale(0.166) translate(-537.200 -217.500)" opacity="0.72"><use href="#bigflower"/></g><path d="M200.15 581.300Q207.45 575.600 214.75 581.300" fill="none" stroke="#4a4a4a" stroke-width="1.300" stroke-dasharray="1.300 0.500" opacity="0.85"/><g transform="translate(247.4 587.400) scale(0.166) translate(-537.200 -217.500)" opacity="0.72"><use href="#bigflower"/></g><path d="M240.1 581.300Q247.4 575.600 254.7 581.300" fill="none" stroke="#4a4a4a" stroke-width="1.300" stroke-dasharray="1.300 0.500" opacity="0.85"/><g transform="translate(287.35 587.400) scale(0.166) translate(-537.200 -217.500)" opacity="0.72"><use href="#bigflower"/></g><path d="M280.05 581.300Q287.35 575.600 294.65 581.300" fill="none" stroke="#4a4a4a" stroke-width="1.300" stroke-dasharray="1.300 0.500" opacity="0.85"/><g transform="translate(327.3 587.400) scale(0.166) translate(-537.200 -217.500)" opacity="0.72"><use href="#bigflower"/></g><path d="M320 581.300Q327.3 575.600 334.6 581.300" fill="none" stroke="#4a4a4a" stroke-width="1.300" stroke-dasharray="1.300 0.500" opacity="0.85"/><g transform="translate(367.25 587.400) scale(0.166) translate(-537.200 -217.500)" opacity="0.72"><use href="#bigflower"/></g><path d="M359.95 581.300Q367.25 575.600 374.55 581.300" fill="none" stroke="#4a4a4a" stroke-width="1.300" stroke-dasharray="1.300 0.500" opacity="0.85"/><g transform="translate(407.2 587.400) scale(0.166) translate(-537.200 -217.500)" opacity="0.72"><use href="#bigflower"/></g><path d="M399.9 581.300Q407.2 575.600 414.5 581.300" fill="none" stroke="#4a4a4a" stroke-width="1.300" stroke-dasharray="1.300 0.500" opacity="0.85"/><g transform="translate(447.15 587.400) scale(0.166) translate(-537.200 -217.500)" opacity="0.72"><use href="#bigflower"/></g><path d="M439.85 581.300Q447.15 575.600 454.45 581.300" fill="none" stroke="#4a4a4a" stroke-width="1.300" stroke-dasharray="1.300 0.500" opacity="0.85"/></svg></div>
<svg style="left:0px;top:0px;" width="1024" height="730" viewBox="0 0 1024 730"><rect x="145.750" y="443.500" width="1.300" height="267" fill="#e2e2e2"/></svg>
<svg style="left:142.2px;top:433.1px;" width="8.3" height="11.4" viewBox="0 0 8.3 11.4"><path d="M0.800 2.100Q0.800 0.800 2.100 0.800H6.200Q7.500 0.800 7.500 2.100V6.400Q7.500 9.600 4.150 10.600Q0.800 9.600 0.800 6.400Z" fill="#252525" stroke="#f4f4f4" stroke-width="1.55" stroke-linejoin="round"/><path d="M4.150 3.200V7.600" fill="none" stroke="#3c3c3c" stroke-width="1" /></svg>
<div class="abs" style="left:108.5px;top:716.7px;width:901.5px;height:4.2px;background:#3c3c3c;border-radius:2.1px;"></div>
<!-- s_annot -->
<svg style="left:0;top:0" width="1024" height="730" viewBox="0 0 1024 730"><rect x="88.15" y="27.15" width="115.9" height="39.1" rx="4.2" ry="4.2" fill="none" stroke="#fb4a45" stroke-width="3.7"/><rect x="12.75" y="94.55" width="273.7" height="308.7" rx="4.2" ry="4.2" fill="none" stroke="#fb4a45" stroke-width="3.7"/><rect x="903.15" y="33.75" width="40" height="26.1" rx="3.6" ry="3.6" fill="none" stroke="#fb4a45" stroke-width="3.7"/><rect x="717.75" y="68.75" width="295.8" height="332.2" rx="4.2" ry="4.2" fill="none" stroke="#fb4a45" stroke-width="3.7"/></svg>
</div>
</body>
</html>
